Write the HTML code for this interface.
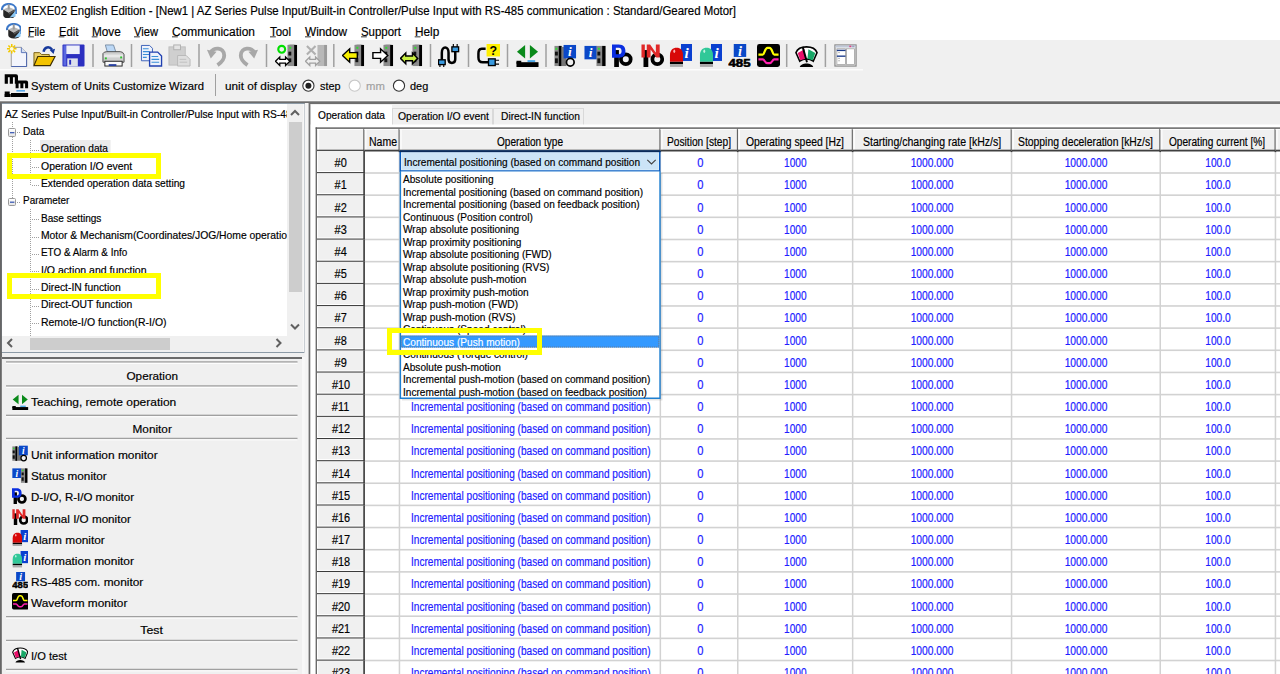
<!DOCTYPE html><html><head><meta charset="utf-8"><style>
html,body{margin:0;padding:0;width:1280px;height:674px;overflow:hidden;background:#f0f0f0;font-family:"Liberation Sans",sans-serif;}
div{position:absolute;box-sizing:border-box;}
.t{white-space:nowrap;transform-origin:0 50%;-webkit-text-stroke:0.18px currentColor;}
svg{position:absolute;}
</style></head><body>
<svg style="left:0;top:0" width="1280" height="674"><rect x="0.00" y="0.00" width="1280.00" height="40.00" fill="#fff"/></svg>
<div class="t" style="left:22.00px;top:5.00px;font-size:12px;line-height:12px;color:#000;transform:scaleX(0.9510);">MEXE02 English Edition - [New1 | AZ Series Pulse Input/Built-in Controller/Pulse Input with RS-485 communication : Standard/Geared Motor]</div>
<div class="t" style="left:28.00px;top:26.00px;font-size:12px;line-height:12px;color:#000;transform:scaleX(0.8792);">File</div>
<svg style="left:0;top:0" width="1280" height="674"><rect x="28.00" y="36.40" width="5.80" height="0.90" fill="#202020"/></svg>
<div class="t" style="left:58.60px;top:26.00px;font-size:12px;line-height:12px;color:#000;transform:scaleX(0.9382);">Edit</div>
<svg style="left:0;top:0" width="1280" height="674"><rect x="58.60" y="36.40" width="5.80" height="0.90" fill="#202020"/></svg>
<div class="t" style="left:91.70px;top:26.00px;font-size:12px;line-height:12px;color:#000;transform:scaleX(0.9815);">Move</div>
<svg style="left:0;top:0" width="1280" height="674"><rect x="91.70" y="36.40" width="5.80" height="0.90" fill="#202020"/></svg>
<div class="t" style="left:134.00px;top:26.00px;font-size:12px;line-height:12px;color:#000;transform:scaleX(0.9305);">View</div>
<svg style="left:0;top:0" width="1280" height="674"><rect x="134.00" y="36.40" width="5.80" height="0.90" fill="#202020"/></svg>
<div class="t" style="left:172.00px;top:26.00px;font-size:12px;line-height:12px;color:#000;transform:scaleX(0.9956);">Communication</div>
<svg style="left:0;top:0" width="1280" height="674"><rect x="172.00" y="36.40" width="5.80" height="0.90" fill="#202020"/></svg>
<div class="t" style="left:270.00px;top:26.00px;font-size:12px;line-height:12px;color:#000;transform:scaleX(0.9539);">Tool</div>
<svg style="left:0;top:0" width="1280" height="674"><rect x="270.00" y="36.40" width="5.80" height="0.90" fill="#202020"/></svg>
<div class="t" style="left:305.00px;top:26.00px;font-size:12px;line-height:12px;color:#000;transform:scaleX(0.9841);">Window</div>
<svg style="left:0;top:0" width="1280" height="674"><rect x="305.00" y="36.40" width="5.80" height="0.90" fill="#202020"/></svg>
<div class="t" style="left:361.00px;top:26.00px;font-size:12px;line-height:12px;color:#000;transform:scaleX(0.9517);">Support</div>
<svg style="left:0;top:0" width="1280" height="674"><rect x="361.00" y="36.40" width="5.80" height="0.90" fill="#202020"/></svg>
<div class="t" style="left:414.70px;top:26.00px;font-size:12px;line-height:12px;color:#000;transform:scaleX(0.9846);">Help</div>
<svg style="left:0;top:0" width="1280" height="674"><rect x="414.70" y="36.40" width="5.80" height="0.90" fill="#202020"/><rect x="0.00" y="69.20" width="863.00" height="1.20" fill="#ffffff"/></svg>
<div class="t" style="left:31.00px;top:81.00px;font-size:11.5px;line-height:11.5px;color:#000;transform:scaleX(0.9773);">System of Units Customize Wizard</div>
<svg style="left:0;top:0" width="1280" height="674"><rect x="215.00" y="74.00" width="1.00" height="22.00" fill="#a0a0a0"/></svg>
<div class="t" style="left:224.70px;top:81.00px;font-size:11.5px;line-height:11.5px;color:#000;transform:scaleX(1.0239);">unit of display</div>
<div class="t" style="left:319.50px;top:81.00px;font-size:11.5px;line-height:11.5px;color:#000;transform:scaleX(0.9431);">step</div>
<div class="t" style="left:365.70px;top:81.00px;font-size:11.5px;line-height:11.5px;color:#a0a0a0;transform:scaleX(0.9812);">mm</div>
<div class="t" style="left:409.80px;top:81.00px;font-size:11.5px;line-height:11.5px;color:#000;transform:scaleX(0.9485);">deg</div>
<svg style="left:300px;top:78px" width="16" height="16"><circle cx="8.4" cy="7.7" r="5.6" fill="#fff" stroke="#333" stroke-width="1.1"/><circle cx="8.4" cy="7.7" r="3" fill="#222"/></svg>
<svg style="left:346px;top:78px" width="16" height="16"><circle cx="8.7" cy="7.7" r="5.6" fill="#fff" stroke="#c8c8c8" stroke-width="1.1"/></svg>
<svg style="left:391px;top:78px" width="16" height="16"><circle cx="8" cy="7.7" r="5.6" fill="#fff" stroke="#333" stroke-width="1.1"/></svg>
<svg style="left:5.5px;top:44px" width="23" height="23" viewBox="0 0 24 24"><path d="M5.5 3.5 H16 L21.5 9 V23.5 H5.5 Z" fill="#f3f5fc" stroke="#9a9a9a"/><path d="M21.5 9 V23.5 H5.5" fill="none" stroke="#4a64b0" stroke-width="1"/><path d="M16 3.5 V9 H21.5" fill="#d4def2" stroke="#5a74b8"/><g stroke="#f2c800" stroke-width="1.6"><path d="M1 5 H11 M6 0 V10 M2.5 1.5 L9.5 8.5 M9.5 1.5 L2.5 8.5"/></g><circle cx="6" cy="5" r="2" fill="#fffbe0"/></svg>
<svg style="left:33px;top:44px" width="23" height="23" viewBox="0 0 24 24"><path d="M1 9 H7 L9 11 H17 V22 H1 Z" fill="#e9cf6a" stroke="#7a6010"/><path d="M5 13 H23 L18 22.5 H1 Z" fill="#f3c300" stroke="#3e2e00" stroke-width="1.2"/><path d="M11 8 C12 3 17 2 20 6" fill="none" stroke="#173a9c" stroke-width="2.6"/><path d="M17.5 6.5 L23 5 L21.5 10.5 Z" fill="#173a9c"/></svg>
<svg style="left:62px;top:44px" width="23" height="23" viewBox="0 0 24 24"><rect x="0.5" y="0.5" width="23" height="23" rx="1" fill="#2b2fc0"/><rect x="1.5" y="1.5" width="3" height="21" fill="#5a68e0"/><rect x="4.5" y="1.5" width="14" height="9" fill="#eef0fa"/><rect x="5.5" y="15" width="11" height="8.5" fill="#dde0ec"/><rect x="7.5" y="16.5" width="2" height="5" fill="#2b2fc0"/></svg>
<svg style="left:101.5px;top:44px" width="23" height="23" viewBox="0 0 24 24"><path d="M3.5 1 H12 L15 10 H6 Z" fill="#bcd8f6" stroke="#7a8ea6"/><path d="M1 10 Q2 8 5 8 H19 Q22 8 23 11 V19 H1 Z" fill="#cfcfcf" stroke="#4a4a4a"/><rect x="2" y="11" width="20" height="3" fill="#e8e8e8"/><rect x="3" y="18" width="18" height="5" fill="#fafafa" stroke="#222"/><rect x="7" y="21" width="8" height="2" fill="#2840a0"/><rect x="3" y="14" width="2" height="2" fill="#2ec02e"/><rect x="19" y="13" width="2" height="2" fill="#2ec02e"/></svg>
<svg style="left:139.5px;top:44px" width="23" height="23" viewBox="0 0 24 24"><path d="M1.5 1.5 H10 L13 4.5 V17.5 H1.5Z" fill="#eef2fb" stroke="#3b60b8"/><g stroke="#3b8ed8" stroke-width="1.2"><path d="M3 5 H9 M3 8 H10 M3 11 H10 M3 14 H7"/></g><path d="M10 8.5 H18.5 L22.5 12.5 V23 H10Z" fill="#eef2fb" stroke="#2040b0" stroke-width="1.4"/><g stroke="#3b8ed8" stroke-width="1.2"><path d="M12 13 H19 M12 16 H20 M12 19 H20"/></g></svg>
<svg style="left:168px;top:44px" width="23" height="23" viewBox="0 0 24 24"><rect x="1" y="3" width="17" height="19" fill="#cfcfcf" stroke="#bdbdbd"/><rect x="6" y="1" width="7" height="5" fill="#e4e4e4" stroke="#b0b0b0"/><path d="M10 12 H19 L23 16 V23 H10Z" fill="#dedede" stroke="#b8b8b8"/><g stroke="#c0c0c0"><path d="M12 16 H19 M12 19 H20"/></g></svg>
<svg style="left:206px;top:44px" width="23" height="23" viewBox="0 0 24 24"><path d="M5 9 C7 3 19 3 19 12 C19 17 15 20 12 22" fill="none" stroke="#a8a8a8" stroke-width="4"/><path d="M1 6 L5 15 L11 8 Z" fill="#a8a8a8"/></svg>
<svg style="left:236px;top:44px" width="23" height="23" viewBox="0 0 24 24"><path d="M19 9 C17 3 5 3 5 12 C5 17 9 20 12 22" fill="none" stroke="#a8a8a8" stroke-width="4"/><path d="M23 6 L19 15 L13 8 Z" fill="#a8a8a8"/></svg>
<svg style="left:275px;top:44px" width="23" height="23" viewBox="0 0 24 24"><rect x="13" y="1" width="9" height="22" fill="#8c8c8c"/><rect x="20" y="1" width="3" height="22" fill="#000"/><path d="M13 1 L16 0 H22 L20 1Z" fill="#bbb"/><rect x="15" y="3" width="2" height="2" fill="#2ee02e"/><rect x="14" y="8" width="3" height="4" fill="#111"/><rect x="14" y="15" width="3" height="4" fill="#111"/><circle cx="7" cy="5.5" r="3.6" fill="none" stroke="#00e000" stroke-width="2.2"/><path d="M0.5 18 L5 13.5 V16 H11 V13.5 L15.5 18 L11 22.5 V20 H5 V22.5 Z" fill="#fff" stroke="#000" stroke-width="1.3"/></svg>
<svg style="left:304.5px;top:44px" width="23" height="23" viewBox="0 0 24 24"><rect x="13" y="1" width="9" height="22" fill="#b8b8b8"/><rect x="20" y="1" width="3" height="22" fill="#9a9a9a"/><path d="M2 2 L11 11 M11 2 L2 11" stroke="#b0b0b0" stroke-width="2.2"/><path d="M0.5 18 L5 13.5 V16 H11 V13.5 L15.5 18 L11 22.5 V20 H5 V22.5 Z" fill="#eee" stroke="#a0a0a0" stroke-width="1.3"/></svg>
<svg style="left:342px;top:44px" width="23" height="23" viewBox="0 0 24 24"><rect x="13" y="1" width="9" height="22" fill="#8c8c8c"/><rect x="20" y="1" width="3" height="22" fill="#000"/><path d="M13 1 L16 0 H22 L20 1Z" fill="#bbb"/><rect x="15" y="3" width="2" height="2" fill="#2ee02e"/><rect x="14" y="8" width="3" height="4" fill="#111"/><rect x="14" y="15" width="3" height="4" fill="#111"/><path d="M0.5 12 L8 5 V9 H16 V15 H8 V19 Z" fill="#f8f000" stroke="#000" stroke-width="1.5"/></svg>
<svg style="left:371px;top:44px" width="23" height="23" viewBox="0 0 24 24"><rect x="13" y="1" width="9" height="22" fill="#8c8c8c"/><rect x="20" y="1" width="3" height="22" fill="#000"/><path d="M13 1 L16 0 H22 L20 1Z" fill="#bbb"/><rect x="15" y="3" width="2" height="2" fill="#2ee02e"/><rect x="14" y="8" width="3" height="4" fill="#111"/><rect x="14" y="15" width="3" height="4" fill="#111"/><path d="M17.5 12 L10 5 V9 H2 V15 H10 V19 Z" fill="#fff" stroke="#000" stroke-width="1.5"/></svg>
<svg style="left:400px;top:44px" width="23" height="23" viewBox="0 0 24 24"><rect x="13" y="1" width="9" height="22" fill="#8c8c8c"/><rect x="20" y="1" width="3" height="22" fill="#000"/><path d="M13 1 L16 0 H22 L20 1Z" fill="#bbb"/><rect x="15" y="3" width="2" height="2" fill="#2ee02e"/><rect x="14" y="8" width="3" height="4" fill="#111"/><rect x="14" y="15" width="3" height="4" fill="#111"/><path d="M0.5 15 L6 9.5 V12.5 H13 V9.5 L18.5 15 L13 20.5 V17.5 H6 V20.5 Z" fill="#c8f040" stroke="#000" stroke-width="1.5"/></svg>
<svg style="left:438px;top:44px" width="23" height="23" viewBox="0 0 24 24"><path d="M4 18 V9 C4 2 11 2 11 9 V16 C11 21 18 21 18 16 V7" fill="none" stroke="#000" stroke-width="2.6"/><rect x="0.5" y="16.5" width="7" height="5" fill="#3a9be0" stroke="#000" stroke-width="1.4"/><path d="M2 22 V24 M6 22 V24" stroke="#000" stroke-width="1.2"/><rect x="14.5" y="3" width="7" height="5" fill="#3a9be0" stroke="#000" stroke-width="1.4"/><path d="M16 0 V3 M20 0 V3" stroke="#000" stroke-width="1.2"/></svg>
<svg style="left:477px;top:44px" width="23" height="23" viewBox="0 0 24 24"><rect x="10" y="0" width="14" height="13" fill="#ffef00"/><text x="17" y="11" font-family="Liberation Sans" font-weight="bold" font-size="13" text-anchor="middle" fill="#000">?</text><path d="M9 5 H5 C2 5 1.5 7 1.5 10 V14 C1.5 18 3 19 6 19 H13" fill="none" stroke="#000" stroke-width="2.6"/><rect x="12" y="15.5" width="7" height="7" fill="#3a9be0" stroke="#000" stroke-width="1.4"/><path d="M19 17 H23 M19 21 H23" stroke="#000" stroke-width="1.2"/></svg>
<svg style="left:516px;top:44px" width="23" height="23" viewBox="0 0 24 24"><path d="M9.5 1 L1 8 L9.5 15 Z" fill="#0a8a1a"/><path d="M14.5 1 L23 8 L14.5 15 Z" fill="#0a8a1a"/><rect x="12" y="17" width="8" height="1.6" fill="#2a9ae8"/><rect x="0.5" y="19" width="23" height="5" fill="#000"/><rect x="0.5" y="17.5" width="5" height="3" fill="#000"/></svg>
<svg style="left:554px;top:44px" width="23" height="23" viewBox="0 0 24 24"><rect x="0.5" y="2" width="7" height="21" fill="#888"/><rect x="5" y="2" width="3" height="21" fill="#000"/><rect x="1.5" y="4" width="2" height="2" fill="#2ee02e"/><rect x="1" y="8" width="3" height="4" fill="#111"/><rect x="1" y="15" width="3" height="5" fill="#111"/><rect x="8" y="3" width="5" height="20" fill="#777"/><rect x="10" y="1" width="13" height="14" fill="#0a48c8"/><text x="16.5" y="13" font-family="Liberation Serif" font-style="italic" font-weight="bold" font-size="14" text-anchor="middle" fill="#fff">i</text><circle cx="17" cy="19" r="4" fill="none" stroke="#000" stroke-width="1.8"/></svg>
<svg style="left:583.5px;top:44px" width="23" height="23" viewBox="0 0 24 24"><rect x="0.5" y="2" width="13" height="14" fill="#0a48c8"/><text x="7" y="14" font-family="Liberation Serif" font-style="italic" font-weight="bold" font-size="14" text-anchor="middle" fill="#fff">i</text><rect x="13" y="2" width="7" height="21" fill="#888"/><rect x="19" y="2" width="3.5" height="21" fill="#000"/><rect x="14.5" y="4" width="2" height="2" fill="#2ee02e"/><rect x="14" y="8" width="3" height="4" fill="#111"/><rect x="14" y="15" width="3" height="5" fill="#111"/></svg>
<svg style="left:612px;top:44px" width="23" height="23" viewBox="0 0 24 24"><rect x="2.3" y="6.3" width="4.9" height="17.7" fill="#000"/><circle cx="14.4" cy="16" r="5.1" fill="none" stroke="#000" stroke-width="3.9"/><path fill-rule="evenodd" d="M0 0.5 H7 C12.5 0.5 14 4 14 7.5 C14 11 12.5 14.3 7 14.3 H0 Z M4 4 H7 C9.5 4 10 6 10 7.5 C10 9 9.5 10.8 7 10.8 H4 Z" fill="#0a2ee0"/></svg>
<svg style="left:640.5px;top:44px" width="23" height="23" viewBox="0 0 24 24"><rect x="2.6" y="6.3" width="5" height="17.7" fill="#000"/><circle cx="17" cy="16" r="5.1" fill="none" stroke="#000" stroke-width="3.9"/><path d="M0.5 0.5 H4 V14.2 H0.5Z M6 0.5 H9.5 L15.5 9 V0.5 H19.5 V14.2 H16 L10 5.7 V14.2 H6Z" fill="#e02828"/></svg>
<svg style="left:669px;top:44px" width="23" height="23" viewBox="0 0 24 24"><rect x="12.5" y="0" width="11.5" height="17.7" fill="#0a40d0"/><text x="18.5" y="15" font-family="Liberation Serif" font-style="italic" font-weight="bold" font-size="16" text-anchor="middle" fill="#fff">i</text><path d="M1 18.6 V12 C1 6.5 4 4 8 4 C12 4 14.6 6.5 14.6 12 V18.6 Z" fill="#d80808"/><ellipse cx="5.5" cy="7.5" rx="1" ry="1.8" fill="#f8b0b0"/><rect x="1" y="18.6" width="13.6" height="2.3" fill="#000"/><rect x="1" y="20.9" width="13.6" height="3" fill="#aaa"/></svg>
<svg style="left:698.5px;top:44px" width="23" height="23" viewBox="0 0 24 24"><rect x="12.5" y="0" width="11.5" height="17.7" fill="#0a40d0"/><text x="18.5" y="15" font-family="Liberation Serif" font-style="italic" font-weight="bold" font-size="16" text-anchor="middle" fill="#fff">i</text><path d="M1 18.6 V12 C1 6.5 4 4 8 4 C12 4 14.6 6.5 14.6 12 V18.6 Z" fill="#30c898"/><ellipse cx="5.5" cy="7.5" rx="1" ry="1.8" fill="#c0f0e0"/><rect x="1" y="18.6" width="13.6" height="2.3" fill="#000"/><rect x="1" y="20.9" width="13.6" height="3" fill="#aaa"/></svg>
<svg style="left:728px;top:44px" width="23" height="23" viewBox="0 0 24 24"><rect x="6" y="0" width="13" height="13.5" fill="#0a48c8"/><text x="12.5" y="12" font-family="Liberation Serif" font-style="italic" font-weight="bold" font-size="15" text-anchor="middle" fill="#fff">i</text><text x="0.5" y="23.8" font-family="Liberation Sans" font-weight="bold" font-size="12" fill="#000" stroke="#000" stroke-width="0.6" textLength="23" lengthAdjust="spacingAndGlyphs">485</text></svg>
<svg style="left:757px;top:44px" width="23" height="23" viewBox="0 0 24 24"><rect x="0" y="0" width="24" height="24" rx="2.5" fill="#000"/><path d="M1.5 11 H6 C8 11 8 4 11 4 H13 C16 4 16 11 18 11 H22.5" fill="none" stroke="#ffff00" stroke-width="2.3"/><path d="M1.5 16 H6 C8 16 8 20 11 20 H13 C16 20 16 16 18 16 H22.5" fill="none" stroke="#ff20b0" stroke-width="2.3"/></svg>
<svg style="left:795px;top:44px" width="23" height="23" viewBox="0 0 24 24"><path d="M1 9 C4 1 20 1 23 9 L19 18 C15 15 9 15 5 18 Z" fill="#fff" stroke="#000" stroke-width="1.6"/><path d="M2.8 9.5 L10 5.5 L11 15.5 L5.5 17 Z" fill="#e8106a"/><path d="M14 5.5 L21.2 9.5 L18.5 17 L13 15.5 Z" fill="#18a868"/><path d="M8 3 L12.5 19" stroke="#000" stroke-width="2"/><path d="M5 24 C6 19 18 19 19 24 Z" fill="#000"/></svg>
<svg style="left:834px;top:44px" width="23" height="23" viewBox="0 0 24 24"><rect x="1" y="1" width="22" height="22" fill="#fafafa" stroke="#8a8a8a" stroke-width="1.3"/><rect x="1.5" y="1.5" width="21" height="2.2" fill="#c0c8d8"/><rect x="16" y="1.7" width="2" height="1.6" fill="#e04080"/><rect x="19" y="1.7" width="2" height="1.6" fill="#a0a0c0"/><rect x="3" y="5" width="9" height="16.5" fill="#fff" stroke="#9a9a9a" stroke-width="0.8"/><rect x="3" y="6" width="9" height="1.4" fill="#1a3a8a"/><rect x="3" y="12" width="9" height="1.4" fill="#1a3a8a"/><path d="M4.5 9 H6 M4.5 15 H6 M4.5 17.5 H6" stroke="#888" stroke-width="0.8"/><rect x="13" y="5" width="8.5" height="16.5" fill="#fff" stroke="#9a9a9a" stroke-width="0.8"/><rect x="2" y="21.5" width="20" height="1" fill="#bbb"/></svg>
<svg style="left:0;top:0" width="1280" height="674"><rect x="92.25" y="44.00" width="1.50" height="23.00" fill="#a0a0a0"/><rect x="130.75" y="44.00" width="1.50" height="23.00" fill="#a0a0a0"/><rect x="198.25" y="44.00" width="1.50" height="23.00" fill="#a0a0a0"/><rect x="265.75" y="44.00" width="1.50" height="23.00" fill="#a0a0a0"/><rect x="333.05" y="44.00" width="1.50" height="23.00" fill="#a0a0a0"/><rect x="429.75" y="44.00" width="1.50" height="23.00" fill="#a0a0a0"/><rect x="467.75" y="44.00" width="1.50" height="23.00" fill="#a0a0a0"/><rect x="506.75" y="44.00" width="1.50" height="23.00" fill="#a0a0a0"/><rect x="545.25" y="44.00" width="1.50" height="23.00" fill="#a0a0a0"/><rect x="785.95" y="44.00" width="1.50" height="23.00" fill="#a0a0a0"/><rect x="824.65" y="44.00" width="1.50" height="23.00" fill="#a0a0a0"/></svg>
<svg style="left:1px;top:2.5px" width="15.5" height="15.5" viewBox="0 0 24 24"><path d="M1.5 11 C1 4 7 1.5 12 1.5 C17 1.5 23 4 23 10 V17" fill="none" stroke="#3d78c8" stroke-width="3.2"/><path d="M3.5 10 L12 6 L21 10 L12 15 Z" fill="#b8b8b8"/><path d="M3.5 10 L12 15 L21 10 V20 C21 23 16 24 12 24 C7 24 3.5 22 3.5 19 Z" fill="#262626"/><path d="M12 15 L21 10 V13 L12 18Z" fill="#555"/><rect x="10.5" y="2" width="3" height="8" fill="#9a9a9a"/><path d="M13 23 L22.5 12 V21 Z" fill="#8cc8f4"/></svg>
<svg style="left:5.7px;top:23px" width="15.5" height="15.5" viewBox="0 0 24 24"><path d="M1.5 11 C1 4 7 1.5 12 1.5 C17 1.5 23 4 23 10 V17" fill="none" stroke="#3d78c8" stroke-width="3.2"/><path d="M3.5 10 L12 6 L21 10 L12 15 Z" fill="#b8b8b8"/><path d="M3.5 10 L12 15 L21 10 V20 C21 23 16 24 12 24 C7 24 3.5 22 3.5 19 Z" fill="#262626"/><path d="M12 15 L21 10 V13 L12 18Z" fill="#555"/><rect x="10.5" y="2" width="3" height="8" fill="#9a9a9a"/><path d="M13 23 L22.5 12 V21 Z" fill="#8cc8f4"/></svg>
<svg style="left:0;top:70px" width="40" height="30" viewBox="0 70 40 30"><path d="M4.7 83.7 V74.3 H16 Q18 74.3 18 76.3 V83.7 H14.808 V77.3 H12.946000000000002 V83.7 H9.754000000000001 V77.3 H7.892 V83.7 Z" fill="#000"/><path d="M15.6 88.3 V80.5 H26.1 Q28.1 80.5 28.1 82.5 V88.3 H25.1 V83.5 H23.35 V88.3 H20.35 V83.5 H18.6 V88.3 Z" fill="#000"/><rect x="4.7" y="91.5" width="5" height="5.5" fill="#000"/><rect x="4.7" y="94" width="6" height="3" fill="#000"/><rect x="11" y="93" width="17.1" height="4" fill="#000"/><rect x="16.4" y="90.2" width="8.6" height="1.3" fill="#3a9ae8"/></svg>
<svg style="left:0;top:0" width="1280" height="674"><rect x="0.00" y="100.50" width="1280.00" height="1.00" fill="#fbfbfb"/><rect x="0.00" y="101.30" width="1280.00" height="2.70" fill="#6e6e6e"/><rect x="0.00" y="103.00" width="304.50" height="250.00" fill="#8c9aa6"/><rect x="0.00" y="103.00" width="1.80" height="571.00" fill="#666"/><rect x="2.00" y="104.00" width="302.00" height="248.00" fill="#fff"/><rect x="287.00" y="104.00" width="16.50" height="232.00" fill="#f0f0f0"/><rect x="289.00" y="122.00" width="13.00" height="170.00" fill="#cdcdcd"/><rect x="2.00" y="336.00" width="285.50" height="16.00" fill="#f0f0f0"/><rect x="30.00" y="338.00" width="140.00" height="12.00" fill="#cdcdcd"/><rect x="287.00" y="336.00" width="16.50" height="16.00" fill="#f0f0f0"/><rect x="40.00" y="140.00" width="70.60" height="12.60" fill="#ececec"/></svg>
<div style="left:2px;top:104px;width:285px;height:232px;overflow:hidden">
<div class="t" style="left:3px;top:5.00px;font-size:11.5px;line-height:11.5px;transform:scaleX(0.8880)">AZ Series Pulse Input/Built-in Controller/Pulse Input with RS-485 communication</div>
<div class="t" style="left:21px;top:22.00px;font-size:11.5px;line-height:11.5px;transform:scaleX(0.8768)">Data</div>
<div class="t" style="left:39px;top:39.00px;font-size:11.5px;line-height:11.5px;transform:scaleX(0.8806)">Operation data</div>
<div class="t" style="left:39px;top:57.00px;font-size:11.5px;line-height:11.5px;transform:scaleX(0.9087)">Operation I/O event</div>
<div class="t" style="left:39px;top:74.00px;font-size:11.5px;line-height:11.5px;transform:scaleX(0.8867)">Extended operation data setting</div>
<div class="t" style="left:21px;top:91.00px;font-size:11.5px;line-height:11.5px;transform:scaleX(0.8643)">Parameter</div>
<div class="t" style="left:39px;top:109.00px;font-size:11.5px;line-height:11.5px;transform:scaleX(0.8749)">Base settings</div>
<div class="t" style="left:39px;top:126.00px;font-size:11.5px;line-height:11.5px;transform:scaleX(0.8990)">Motor &amp; Mechanism(Coordinates/JOG/Home operation)</div>
<div class="t" style="left:39px;top:143.00px;font-size:11.5px;line-height:11.5px;transform:scaleX(0.8609)">ETO &amp; Alarm &amp; Info</div>
<div class="t" style="left:39px;top:161.00px;font-size:11.5px;line-height:11.5px;transform:scaleX(0.9168)">I/O action and function</div>
<div class="t" style="left:39px;top:178.00px;font-size:11.5px;line-height:11.5px;transform:scaleX(0.8972)">Direct-IN function</div>
<div class="t" style="left:39px;top:195.00px;font-size:11.5px;line-height:11.5px;transform:scaleX(0.8994)">Direct-OUT function</div>
<div class="t" style="left:39px;top:213.00px;font-size:11.5px;line-height:11.5px;transform:scaleX(0.9092)">Remote-I/O function(R-I/O)</div>
</div>
<div style="left:11.5px;top:122px;width:1px;height:6px;background:repeating-linear-gradient(to bottom,#a0a0a0 0 1px,transparent 1px 2px)"></div>
<div style="left:11.5px;top:137px;width:1px;height:60.5px;background:repeating-linear-gradient(to bottom,#a0a0a0 0 1px,transparent 1px 2px)"></div>
<div style="left:30px;top:139.5px;width:1px;height:45.0px;background:repeating-linear-gradient(to bottom,#a0a0a0 0 1px,transparent 1px 2px)"></div>
<div style="left:30px;top:209px;width:1px;height:127px;background:repeating-linear-gradient(to bottom,#a0a0a0 0 1px,transparent 1px 2px)"></div>
<div style="left:31.5px;top:150.06px;width:8.0px;height:1px;background:repeating-linear-gradient(to right,#a0a0a0 0 1px,transparent 1px 2px)"></div>
<div style="left:31.5px;top:167.39px;width:8.0px;height:1px;background:repeating-linear-gradient(to right,#a0a0a0 0 1px,transparent 1px 2px)"></div>
<div style="left:31.5px;top:184.72px;width:8.0px;height:1px;background:repeating-linear-gradient(to right,#a0a0a0 0 1px,transparent 1px 2px)"></div>
<div style="left:31.5px;top:219.38px;width:8.0px;height:1px;background:repeating-linear-gradient(to right,#a0a0a0 0 1px,transparent 1px 2px)"></div>
<div style="left:31.5px;top:236.70999999999998px;width:8.0px;height:1px;background:repeating-linear-gradient(to right,#a0a0a0 0 1px,transparent 1px 2px)"></div>
<div style="left:31.5px;top:254.04000000000002px;width:8.0px;height:1px;background:repeating-linear-gradient(to right,#a0a0a0 0 1px,transparent 1px 2px)"></div>
<div style="left:31.5px;top:271.36999999999995px;width:8.0px;height:1px;background:repeating-linear-gradient(to right,#a0a0a0 0 1px,transparent 1px 2px)"></div>
<div style="left:31.5px;top:288.7px;width:8.0px;height:1px;background:repeating-linear-gradient(to right,#a0a0a0 0 1px,transparent 1px 2px)"></div>
<div style="left:31.5px;top:306.03000000000003px;width:8.0px;height:1px;background:repeating-linear-gradient(to right,#a0a0a0 0 1px,transparent 1px 2px)"></div>
<div style="left:31.5px;top:323.35999999999996px;width:8.0px;height:1px;background:repeating-linear-gradient(to right,#a0a0a0 0 1px,transparent 1px 2px)"></div>
<div style="left:16.5px;top:132.2px;width:4.5px;height:1px;background:repeating-linear-gradient(to right,#a0a0a0 0 1px,transparent 1px 2px)"></div>
<div style="left:16.5px;top:201.6px;width:4.5px;height:1px;background:repeating-linear-gradient(to right,#a0a0a0 0 1px,transparent 1px 2px)"></div>
<div style="left:7.7px;top:128.3px;width:8.6px;height:8.6px;border:1px solid #9a9a9a;border-radius:1.5px;background:linear-gradient(#fff,#e4e4e4)"></div>
<svg style="left:0;top:0" width="1280" height="674"><rect x="10.00" y="132.10" width="4.40" height="1.20" fill="#3050b0"/></svg>
<div style="left:7.7px;top:197.8px;width:8.6px;height:8.6px;border:1px solid #9a9a9a;border-radius:1.5px;background:linear-gradient(#fff,#e4e4e4)"></div>
<svg style="left:0;top:0" width="1280" height="674"><rect x="10.00" y="201.60" width="4.40" height="1.20" fill="#3050b0"/></svg>
<svg style="left:0;top:0" width="1280" height="674"><path d="M291 115 L295 111 L299 115" fill="none" stroke="#606060" stroke-width="2"/></svg>
<svg style="left:0;top:0" width="1280" height="674"><path d="M291 324.5 L295 328.5 L299 324.5" fill="none" stroke="#606060" stroke-width="2"/></svg>
<svg style="left:0;top:0" width="1280" height="674"><path d="M12 339 L8 343 L12 347" fill="none" stroke="#606060" stroke-width="2"/></svg>
<svg style="left:0;top:0" width="1280" height="674"><path d="M276.5 339 L280.5 343 L276.5 347" fill="none" stroke="#606060" stroke-width="2"/></svg>
<svg style="left:0;top:0" width="1280" height="674"><rect x="0.00" y="357.00" width="304.00" height="317.00" fill="#f0f0f0"/><rect x="0.00" y="352.00" width="1.80" height="322.00" fill="#666"/><rect x="2.00" y="357.00" width="301.00" height="2.00" fill="#6a6a6a"/><rect x="6.00" y="361.25" width="291.50" height="1.50" fill="#a0a0a0"/><rect x="6.00" y="362.75" width="291.50" height="1.10" fill="#ffffff"/><rect x="6.00" y="385.25" width="291.50" height="1.50" fill="#a0a0a0"/><rect x="6.00" y="386.75" width="291.50" height="1.10" fill="#ffffff"/><rect x="6.00" y="414.65" width="291.50" height="1.50" fill="#a0a0a0"/><rect x="6.00" y="416.15" width="291.50" height="1.10" fill="#ffffff"/><rect x="6.00" y="437.75" width="291.50" height="1.50" fill="#a0a0a0"/><rect x="6.00" y="439.25" width="291.50" height="1.10" fill="#ffffff"/><rect x="6.00" y="616.00" width="291.50" height="1.50" fill="#a0a0a0"/><rect x="6.00" y="617.50" width="291.50" height="1.10" fill="#ffffff"/><rect x="6.00" y="639.75" width="291.50" height="1.50" fill="#a0a0a0"/><rect x="6.00" y="641.25" width="291.50" height="1.10" fill="#ffffff"/><rect x="6.00" y="668.75" width="291.50" height="1.50" fill="#a0a0a0"/><rect x="6.00" y="670.25" width="291.50" height="1.10" fill="#ffffff"/></svg>
<div class="t" style="left:126.75px;top:371.00px;font-size:11.5px;line-height:11.5px;color:#000;transform-origin:50% 50%;transform:scaleX(1.0197);">Operation</div>
<div class="t" style="left:132.83px;top:424.00px;font-size:11.5px;line-height:11.5px;color:#000;transform-origin:50% 50%;transform:scaleX(1.0249);">Monitor</div>
<div class="t" style="left:141.45px;top:625.00px;font-size:11.5px;line-height:11.5px;color:#000;transform-origin:50% 50%;transform:scaleX(1.0716);">Test</div>
<div class="t" style="left:30.80px;top:397.00px;font-size:11.5px;line-height:11.5px;color:#000;transform:scaleX(1.0419);">Teaching, remote operation</div>
<div class="t" style="left:31.00px;top:450.00px;font-size:11.5px;line-height:11.5px;color:#000;transform:scaleX(1.0379);">Unit information monitor</div>
<div class="t" style="left:31.00px;top:471.00px;font-size:11.5px;line-height:11.5px;color:#000;transform:scaleX(1.0210);">Status monitor</div>
<div class="t" style="left:31.00px;top:492.00px;font-size:11.5px;line-height:11.5px;color:#000;transform:scaleX(1.0013);">D-I/O, R-I/O monitor</div>
<div class="t" style="left:31.00px;top:514.00px;font-size:11.5px;line-height:11.5px;color:#000;transform:scaleX(1.0139);">Internal I/O monitor</div>
<div class="t" style="left:31.00px;top:535.00px;font-size:11.5px;line-height:11.5px;color:#000;transform:scaleX(1.0311);">Alarm monitor</div>
<div class="t" style="left:31.00px;top:556.00px;font-size:11.5px;line-height:11.5px;color:#000;transform:scaleX(1.0397);">Information monitor</div>
<div class="t" style="left:31.00px;top:577.00px;font-size:11.5px;line-height:11.5px;color:#000;transform:scaleX(1.0336);">RS-485 com. monitor</div>
<div class="t" style="left:31.00px;top:598.00px;font-size:11.5px;line-height:11.5px;color:#000;transform:scaleX(1.0309);">Waveform monitor</div>
<div class="t" style="left:31.00px;top:651.00px;font-size:11.5px;line-height:11.5px;color:#000;transform:scaleX(0.9658);">I/O test</div>
<svg style="left:12px;top:393.5px" width="16.5" height="16.5" viewBox="0 0 24 24"><path d="M9.5 1 L1 8 L9.5 15 Z" fill="#0a8a1a"/><path d="M14.5 1 L23 8 L14.5 15 Z" fill="#0a8a1a"/><rect x="12" y="17" width="8" height="1.6" fill="#2a9ae8"/><rect x="0.5" y="19" width="23" height="5" fill="#000"/><rect x="0.5" y="17.5" width="5" height="3" fill="#000"/></svg>
<svg style="left:11.5px;top:445.4px" width="16.5" height="16.5" viewBox="0 0 24 24"><rect x="0.5" y="2" width="7" height="21" fill="#888"/><rect x="5" y="2" width="3" height="21" fill="#000"/><rect x="1.5" y="4" width="2" height="2" fill="#2ee02e"/><rect x="1" y="8" width="3" height="4" fill="#111"/><rect x="1" y="15" width="3" height="5" fill="#111"/><rect x="8" y="3" width="5" height="20" fill="#777"/><rect x="10" y="1" width="13" height="14" fill="#0a48c8"/><text x="16.5" y="13" font-family="Liberation Serif" font-style="italic" font-weight="bold" font-size="14" text-anchor="middle" fill="#fff">i</text><circle cx="17" cy="19" r="4" fill="none" stroke="#000" stroke-width="1.8"/></svg>
<svg style="left:11.5px;top:466.52px" width="16.5" height="16.5" viewBox="0 0 24 24"><rect x="0.5" y="2" width="13" height="14" fill="#0a48c8"/><text x="7" y="14" font-family="Liberation Serif" font-style="italic" font-weight="bold" font-size="14" text-anchor="middle" fill="#fff">i</text><rect x="13" y="2" width="7" height="21" fill="#888"/><rect x="19" y="2" width="3.5" height="21" fill="#000"/><rect x="14.5" y="4" width="2" height="2" fill="#2ee02e"/><rect x="14" y="8" width="3" height="4" fill="#111"/><rect x="14" y="15" width="3" height="5" fill="#111"/></svg>
<svg style="left:11.5px;top:487.64px" width="16.5" height="16.5" viewBox="0 0 24 24"><rect x="2.3" y="6.3" width="4.9" height="17.7" fill="#000"/><circle cx="14.4" cy="16" r="5.1" fill="none" stroke="#000" stroke-width="3.9"/><path fill-rule="evenodd" d="M0 0.5 H7 C12.5 0.5 14 4 14 7.5 C14 11 12.5 14.3 7 14.3 H0 Z M4 4 H7 C9.5 4 10 6 10 7.5 C10 9 9.5 10.8 7 10.8 H4 Z" fill="#0a2ee0"/></svg>
<svg style="left:11.5px;top:508.75999999999993px" width="16.5" height="16.5" viewBox="0 0 24 24"><rect x="2.6" y="6.3" width="5" height="17.7" fill="#000"/><circle cx="17" cy="16" r="5.1" fill="none" stroke="#000" stroke-width="3.9"/><path d="M0.5 0.5 H4 V14.2 H0.5Z M6 0.5 H9.5 L15.5 9 V0.5 H19.5 V14.2 H16 L10 5.7 V14.2 H6Z" fill="#e02828"/></svg>
<svg style="left:11.5px;top:529.88px" width="16.5" height="16.5" viewBox="0 0 24 24"><rect x="12.5" y="0" width="11.5" height="17.7" fill="#0a40d0"/><text x="18.5" y="15" font-family="Liberation Serif" font-style="italic" font-weight="bold" font-size="16" text-anchor="middle" fill="#fff">i</text><path d="M1 18.6 V12 C1 6.5 4 4 8 4 C12 4 14.6 6.5 14.6 12 V18.6 Z" fill="#d80808"/><ellipse cx="5.5" cy="7.5" rx="1" ry="1.8" fill="#f8b0b0"/><rect x="1" y="18.6" width="13.6" height="2.3" fill="#000"/><rect x="1" y="20.9" width="13.6" height="3" fill="#aaa"/></svg>
<svg style="left:11.5px;top:551.0px" width="16.5" height="16.5" viewBox="0 0 24 24"><rect x="12.5" y="0" width="11.5" height="17.7" fill="#0a40d0"/><text x="18.5" y="15" font-family="Liberation Serif" font-style="italic" font-weight="bold" font-size="16" text-anchor="middle" fill="#fff">i</text><path d="M1 18.6 V12 C1 6.5 4 4 8 4 C12 4 14.6 6.5 14.6 12 V18.6 Z" fill="#30c898"/><ellipse cx="5.5" cy="7.5" rx="1" ry="1.8" fill="#c0f0e0"/><rect x="1" y="18.6" width="13.6" height="2.3" fill="#000"/><rect x="1" y="20.9" width="13.6" height="3" fill="#aaa"/></svg>
<svg style="left:11.5px;top:572.12px" width="16.5" height="16.5" viewBox="0 0 24 24"><rect x="6" y="0" width="13" height="13.5" fill="#0a48c8"/><text x="12.5" y="12" font-family="Liberation Serif" font-style="italic" font-weight="bold" font-size="15" text-anchor="middle" fill="#fff">i</text><text x="0.5" y="23.8" font-family="Liberation Sans" font-weight="bold" font-size="12" fill="#000" stroke="#000" stroke-width="0.6" textLength="23" lengthAdjust="spacingAndGlyphs">485</text></svg>
<svg style="left:11.5px;top:593.24px" width="16.5" height="16.5" viewBox="0 0 24 24"><rect x="0" y="0" width="24" height="24" rx="2.5" fill="#000"/><path d="M1.5 11 H6 C8 11 8 4 11 4 H13 C16 4 16 11 18 11 H22.5" fill="none" stroke="#ffff00" stroke-width="2.3"/><path d="M1.5 16 H6 C8 16 8 20 11 20 H13 C16 20 16 16 18 16 H22.5" fill="none" stroke="#ff20b0" stroke-width="2.3"/></svg>
<svg style="left:11.5px;top:646.2px" width="16.5" height="16.5" viewBox="0 0 24 24"><path d="M1 9 C4 1 20 1 23 9 L19 18 C15 15 9 15 5 18 Z" fill="#fff" stroke="#000" stroke-width="1.6"/><path d="M2.8 9.5 L10 5.5 L11 15.5 L5.5 17 Z" fill="#e8106a"/><path d="M14 5.5 L21.2 9.5 L18.5 17 L13 15.5 Z" fill="#18a868"/><path d="M8 3 L12.5 19" stroke="#000" stroke-width="2"/><path d="M5 24 C6 19 18 19 19 24 Z" fill="#000"/></svg>
<svg style="left:0;top:0" width="1280" height="674"><rect x="302.00" y="357.00" width="3.00" height="317.00" fill="#f8f8f8"/><rect x="304.80" y="103.00" width="4.10" height="571.00" fill="#f4f4f4"/><rect x="308.60" y="103.00" width="2.00" height="571.00" fill="#6e6e6e"/><rect x="310.60" y="104.00" width="970.00" height="570.00" fill="#f0f0f0"/><rect x="311.00" y="105.00" width="81.00" height="23.00" fill="#fff"/></svg>
<div class="t" style="left:317.70px;top:110.00px;font-size:11.5px;line-height:11.5px;color:#000;transform:scaleX(0.8806);">Operation data</div>
<div style="left:392px;top:107.5px;width:101.39999999999998px;height:17px;background:#f0f0f0;border:1px solid #d9d9d9;border-bottom:none"></div>
<div style="left:493.4px;top:107.5px;width:90.20000000000005px;height:17px;background:#f0f0f0;border:1px solid #d9d9d9;border-bottom:none"></div>
<div class="t" style="left:397.50px;top:111.00px;font-size:11.5px;line-height:11.5px;color:#000;transform:scaleX(0.9067);">Operation I/O event</div>
<div class="t" style="left:500.50px;top:111.00px;font-size:11.5px;line-height:11.5px;color:#000;transform:scaleX(0.8893);">Direct-IN function</div>
<svg style="left:0;top:0" width="1280" height="674"><rect x="310.70" y="124.50" width="969.30" height="549.50" fill="#fff"/><rect x="315.60" y="127.40" width="964.40" height="546.60" fill="#fff"/><rect x="364.30" y="172.20" width="915.70" height="1.60" fill="#d2d2d2"/><rect x="364.30" y="194.36" width="915.70" height="1.60" fill="#d2d2d2"/><rect x="364.30" y="216.52" width="915.70" height="1.60" fill="#d2d2d2"/><rect x="364.30" y="238.68" width="915.70" height="1.60" fill="#d2d2d2"/><rect x="364.30" y="260.84" width="915.70" height="1.60" fill="#d2d2d2"/><rect x="364.30" y="283.00" width="915.70" height="1.60" fill="#d2d2d2"/><rect x="364.30" y="305.16" width="915.70" height="1.60" fill="#d2d2d2"/><rect x="364.30" y="327.32" width="915.70" height="1.60" fill="#d2d2d2"/><rect x="364.30" y="349.48" width="915.70" height="1.60" fill="#d2d2d2"/><rect x="364.30" y="371.64" width="915.70" height="1.60" fill="#d2d2d2"/><rect x="364.30" y="393.80" width="915.70" height="1.60" fill="#d2d2d2"/><rect x="364.30" y="415.96" width="915.70" height="1.60" fill="#d2d2d2"/><rect x="364.30" y="438.12" width="915.70" height="1.60" fill="#d2d2d2"/><rect x="364.30" y="460.28" width="915.70" height="1.60" fill="#d2d2d2"/><rect x="364.30" y="482.44" width="915.70" height="1.60" fill="#d2d2d2"/><rect x="364.30" y="504.60" width="915.70" height="1.60" fill="#d2d2d2"/><rect x="364.30" y="526.76" width="915.70" height="1.60" fill="#d2d2d2"/><rect x="364.30" y="548.92" width="915.70" height="1.60" fill="#d2d2d2"/><rect x="364.30" y="571.08" width="915.70" height="1.60" fill="#d2d2d2"/><rect x="364.30" y="593.24" width="915.70" height="1.60" fill="#d2d2d2"/><rect x="364.30" y="615.40" width="915.70" height="1.60" fill="#d2d2d2"/><rect x="364.30" y="637.56" width="915.70" height="1.60" fill="#d2d2d2"/><rect x="364.30" y="659.72" width="915.70" height="1.60" fill="#d2d2d2"/><rect x="364.30" y="681.88" width="915.70" height="1.60" fill="#d2d2d2"/><rect x="398.70" y="150.80" width="1.50" height="523.20" fill="#d2d2d2"/><rect x="659.60" y="150.80" width="1.50" height="523.20" fill="#d2d2d2"/><rect x="737.00" y="150.80" width="1.50" height="523.20" fill="#d2d2d2"/><rect x="851.90" y="150.80" width="1.50" height="523.20" fill="#d2d2d2"/><rect x="1010.80" y="150.80" width="1.50" height="523.20" fill="#d2d2d2"/><rect x="1159.50" y="150.80" width="1.50" height="523.20" fill="#d2d2d2"/><rect x="1274.70" y="150.80" width="1.50" height="523.20" fill="#d2d2d2"/><rect x="317.00" y="128.70" width="47.30" height="22.10" fill="#f0f0f0"/><rect x="318.00" y="128.70" width="1.10" height="21.40" fill="#ffffff"/><rect x="317.00" y="128.70" width="47.30" height="1.10" fill="#ffffff"/><rect x="363.40" y="128.70" width="1.60" height="23.40" fill="#404040"/><rect x="317.00" y="149.70" width="47.30" height="1.80" fill="#404040"/><rect x="364.30" y="128.70" width="35.20" height="22.10" fill="#f0f0f0"/><rect x="365.30" y="128.70" width="1.10" height="21.40" fill="#ffffff"/><rect x="364.30" y="128.70" width="35.20" height="1.10" fill="#ffffff"/><rect x="398.60" y="128.70" width="1.60" height="23.40" fill="#404040"/><rect x="364.30" y="149.70" width="35.20" height="1.80" fill="#404040"/><rect x="399.50" y="128.70" width="260.90" height="22.10" fill="#f0f0f0"/><rect x="400.50" y="128.70" width="1.10" height="21.40" fill="#ffffff"/><rect x="399.50" y="128.70" width="260.90" height="1.10" fill="#ffffff"/><rect x="659.50" y="128.70" width="1.60" height="23.40" fill="#404040"/><rect x="399.50" y="149.70" width="260.90" height="1.80" fill="#404040"/><rect x="660.40" y="128.70" width="77.40" height="22.10" fill="#f0f0f0"/><rect x="661.40" y="128.70" width="1.10" height="21.40" fill="#ffffff"/><rect x="660.40" y="128.70" width="77.40" height="1.10" fill="#ffffff"/><rect x="736.90" y="128.70" width="1.60" height="23.40" fill="#404040"/><rect x="660.40" y="149.70" width="77.40" height="1.80" fill="#404040"/><rect x="737.80" y="128.70" width="114.90" height="22.10" fill="#f0f0f0"/><rect x="738.80" y="128.70" width="1.10" height="21.40" fill="#ffffff"/><rect x="737.80" y="128.70" width="114.90" height="1.10" fill="#ffffff"/><rect x="851.80" y="128.70" width="1.60" height="23.40" fill="#404040"/><rect x="737.80" y="149.70" width="114.90" height="1.80" fill="#404040"/><rect x="852.70" y="128.70" width="158.90" height="22.10" fill="#f0f0f0"/><rect x="853.70" y="128.70" width="1.10" height="21.40" fill="#ffffff"/><rect x="852.70" y="128.70" width="158.90" height="1.10" fill="#ffffff"/><rect x="1010.70" y="128.70" width="1.60" height="23.40" fill="#404040"/><rect x="852.70" y="149.70" width="158.90" height="1.80" fill="#404040"/><rect x="1011.60" y="128.70" width="148.70" height="22.10" fill="#f0f0f0"/><rect x="1012.60" y="128.70" width="1.10" height="21.40" fill="#ffffff"/><rect x="1011.60" y="128.70" width="148.70" height="1.10" fill="#ffffff"/><rect x="1159.40" y="128.70" width="1.60" height="23.40" fill="#404040"/><rect x="1011.60" y="149.70" width="148.70" height="1.80" fill="#404040"/><rect x="1160.30" y="128.70" width="115.20" height="22.10" fill="#f0f0f0"/><rect x="1161.30" y="128.70" width="1.10" height="21.40" fill="#ffffff"/><rect x="1160.30" y="128.70" width="115.20" height="1.10" fill="#ffffff"/><rect x="1274.60" y="128.70" width="1.60" height="23.40" fill="#404040"/><rect x="1160.30" y="149.70" width="115.20" height="1.80" fill="#404040"/><rect x="1275.50" y="128.70" width="14.50" height="22.10" fill="#f0f0f0"/><rect x="1276.50" y="128.70" width="1.10" height="21.40" fill="#ffffff"/><rect x="1275.50" y="128.70" width="14.50" height="1.10" fill="#ffffff"/><rect x="1289.10" y="128.70" width="1.60" height="23.40" fill="#404040"/><rect x="1275.50" y="149.70" width="14.50" height="1.80" fill="#404040"/><rect x="315.60" y="127.40" width="1.40" height="546.60" fill="#6a6a6a"/><rect x="315.60" y="127.40" width="964.40" height="1.40" fill="#5a5a5a"/></svg>
<div class="t" style="left:369.00px;top:136.00px;font-size:12px;line-height:12px;color:#000;transform:scaleX(0.8747);">Name</div>
<div class="t" style="left:497.00px;top:136.00px;font-size:12px;line-height:12px;color:#000;transform:scaleX(0.8385);">Operation type</div>
<div class="t" style="left:667.00px;top:136.00px;font-size:12px;line-height:12px;color:#000;transform:scaleX(0.8491);">Position [step]</div>
<div class="t" style="left:746.00px;top:136.00px;font-size:12px;line-height:12px;color:#000;transform:scaleX(0.8642);">Operating speed [Hz]</div>
<div class="t" style="left:862.80px;top:136.00px;font-size:12px;line-height:12px;color:#000;transform:scaleX(0.8779);">Starting/changing rate [kHz/s]</div>
<div class="t" style="left:1018.00px;top:136.00px;font-size:12px;line-height:12px;color:#000;transform:scaleX(0.8649);">Stopping deceleration [kHz/s]</div>
<div class="t" style="left:1169.00px;top:136.00px;font-size:12px;line-height:12px;color:#000;transform:scaleX(0.8417);">Operating current [%]</div>
<svg style="left:0;top:0" width="1280" height="674"><rect x="317.00" y="150.94" width="47.30" height="22.16" fill="#f0f0f0"/><rect x="317.00" y="151.94" width="1.10" height="20.16" fill="#ffffff"/><rect x="317.00" y="171.00" width="47.30" height="1.10" fill="#ffffff"/><rect x="317.00" y="173.90" width="47.30" height="1.10" fill="#ffffff"/><rect x="317.00" y="172.10" width="47.30" height="1.80" fill="#383838"/><rect x="363.30" y="150.94" width="1.60" height="22.16" fill="#383838"/></svg>
<div class="t" style="left:333.93px;top:157.00px;font-size:12px;line-height:12px;color:#000;transform-origin:50% 50%;transform:scaleX(0.9104);">#0</div>
<svg style="left:0;top:0" width="1280" height="674"><rect x="317.00" y="173.10" width="47.30" height="22.16" fill="#f0f0f0"/><rect x="317.00" y="174.10" width="1.10" height="20.16" fill="#ffffff"/><rect x="317.00" y="193.16" width="47.30" height="1.10" fill="#ffffff"/><rect x="317.00" y="196.06" width="47.30" height="1.10" fill="#ffffff"/><rect x="317.00" y="194.26" width="47.30" height="1.80" fill="#383838"/><rect x="363.30" y="173.10" width="1.60" height="22.16" fill="#383838"/></svg>
<div class="t" style="left:333.93px;top:179.00px;font-size:12px;line-height:12px;color:#000;transform-origin:50% 50%;transform:scaleX(0.9104);">#1</div>
<svg style="left:0;top:0" width="1280" height="674"><rect x="317.00" y="195.26" width="47.30" height="22.16" fill="#f0f0f0"/><rect x="317.00" y="196.26" width="1.10" height="20.16" fill="#ffffff"/><rect x="317.00" y="215.32" width="47.30" height="1.10" fill="#ffffff"/><rect x="317.00" y="218.22" width="47.30" height="1.10" fill="#ffffff"/><rect x="317.00" y="216.42" width="47.30" height="1.80" fill="#383838"/><rect x="363.30" y="195.26" width="1.60" height="22.16" fill="#383838"/></svg>
<div class="t" style="left:333.93px;top:202.00px;font-size:12px;line-height:12px;color:#000;transform-origin:50% 50%;transform:scaleX(0.9104);">#2</div>
<svg style="left:0;top:0" width="1280" height="674"><rect x="317.00" y="217.42" width="47.30" height="22.16" fill="#f0f0f0"/><rect x="317.00" y="218.42" width="1.10" height="20.16" fill="#ffffff"/><rect x="317.00" y="237.48" width="47.30" height="1.10" fill="#ffffff"/><rect x="317.00" y="240.38" width="47.30" height="1.10" fill="#ffffff"/><rect x="317.00" y="238.58" width="47.30" height="1.80" fill="#383838"/><rect x="363.30" y="217.42" width="1.60" height="22.16" fill="#383838"/></svg>
<div class="t" style="left:333.93px;top:224.00px;font-size:12px;line-height:12px;color:#000;transform-origin:50% 50%;transform:scaleX(0.9104);">#3</div>
<svg style="left:0;top:0" width="1280" height="674"><rect x="317.00" y="239.58" width="47.30" height="22.16" fill="#f0f0f0"/><rect x="317.00" y="240.58" width="1.10" height="20.16" fill="#ffffff"/><rect x="317.00" y="259.64" width="47.30" height="1.10" fill="#ffffff"/><rect x="317.00" y="262.54" width="47.30" height="1.10" fill="#ffffff"/><rect x="317.00" y="260.74" width="47.30" height="1.80" fill="#383838"/><rect x="363.30" y="239.58" width="1.60" height="22.16" fill="#383838"/></svg>
<div class="t" style="left:333.93px;top:246.00px;font-size:12px;line-height:12px;color:#000;transform-origin:50% 50%;transform:scaleX(0.9104);">#4</div>
<svg style="left:0;top:0" width="1280" height="674"><rect x="317.00" y="261.74" width="47.30" height="22.16" fill="#f0f0f0"/><rect x="317.00" y="262.74" width="1.10" height="20.16" fill="#ffffff"/><rect x="317.00" y="281.80" width="47.30" height="1.10" fill="#ffffff"/><rect x="317.00" y="284.70" width="47.30" height="1.10" fill="#ffffff"/><rect x="317.00" y="282.90" width="47.30" height="1.80" fill="#383838"/><rect x="363.30" y="261.74" width="1.60" height="22.16" fill="#383838"/></svg>
<div class="t" style="left:333.93px;top:268.00px;font-size:12px;line-height:12px;color:#000;transform-origin:50% 50%;transform:scaleX(0.9104);">#5</div>
<svg style="left:0;top:0" width="1280" height="674"><rect x="317.00" y="283.90" width="47.30" height="22.16" fill="#f0f0f0"/><rect x="317.00" y="284.90" width="1.10" height="20.16" fill="#ffffff"/><rect x="317.00" y="303.96" width="47.30" height="1.10" fill="#ffffff"/><rect x="317.00" y="306.86" width="47.30" height="1.10" fill="#ffffff"/><rect x="317.00" y="305.06" width="47.30" height="1.80" fill="#383838"/><rect x="363.30" y="283.90" width="1.60" height="22.16" fill="#383838"/></svg>
<div class="t" style="left:333.93px;top:290.00px;font-size:12px;line-height:12px;color:#000;transform-origin:50% 50%;transform:scaleX(0.9104);">#6</div>
<svg style="left:0;top:0" width="1280" height="674"><rect x="317.00" y="306.06" width="47.30" height="22.16" fill="#f0f0f0"/><rect x="317.00" y="307.06" width="1.10" height="20.16" fill="#ffffff"/><rect x="317.00" y="326.12" width="47.30" height="1.10" fill="#ffffff"/><rect x="317.00" y="329.02" width="47.30" height="1.10" fill="#ffffff"/><rect x="317.00" y="327.22" width="47.30" height="1.80" fill="#383838"/><rect x="363.30" y="306.06" width="1.60" height="22.16" fill="#383838"/></svg>
<div class="t" style="left:333.93px;top:312.00px;font-size:12px;line-height:12px;color:#000;transform-origin:50% 50%;transform:scaleX(0.9104);">#7</div>
<svg style="left:0;top:0" width="1280" height="674"><rect x="317.00" y="328.22" width="47.30" height="22.16" fill="#f0f0f0"/><rect x="317.00" y="329.22" width="1.10" height="20.16" fill="#ffffff"/><rect x="317.00" y="348.28" width="47.30" height="1.10" fill="#ffffff"/><rect x="317.00" y="351.18" width="47.30" height="1.10" fill="#ffffff"/><rect x="317.00" y="349.38" width="47.30" height="1.80" fill="#383838"/><rect x="363.30" y="328.22" width="1.60" height="22.16" fill="#383838"/></svg>
<div class="t" style="left:333.93px;top:335.00px;font-size:12px;line-height:12px;color:#000;transform-origin:50% 50%;transform:scaleX(0.9104);">#8</div>
<svg style="left:0;top:0" width="1280" height="674"><rect x="317.00" y="350.38" width="47.30" height="22.16" fill="#f0f0f0"/><rect x="317.00" y="351.38" width="1.10" height="20.16" fill="#ffffff"/><rect x="317.00" y="370.44" width="47.30" height="1.10" fill="#ffffff"/><rect x="317.00" y="373.34" width="47.30" height="1.10" fill="#ffffff"/><rect x="317.00" y="371.54" width="47.30" height="1.80" fill="#383838"/><rect x="363.30" y="350.38" width="1.60" height="22.16" fill="#383838"/></svg>
<div class="t" style="left:333.93px;top:357.00px;font-size:12px;line-height:12px;color:#000;transform-origin:50% 50%;transform:scaleX(0.9104);">#9</div>
<svg style="left:0;top:0" width="1280" height="674"><rect x="317.00" y="372.54" width="47.30" height="22.16" fill="#f0f0f0"/><rect x="317.00" y="373.54" width="1.10" height="20.16" fill="#ffffff"/><rect x="317.00" y="392.60" width="47.30" height="1.10" fill="#ffffff"/><rect x="317.00" y="395.50" width="47.30" height="1.10" fill="#ffffff"/><rect x="317.00" y="393.70" width="47.30" height="1.80" fill="#383838"/><rect x="363.30" y="372.54" width="1.60" height="22.16" fill="#383838"/></svg>
<div class="t" style="left:330.59px;top:379.00px;font-size:12px;line-height:12px;color:#000;transform-origin:50% 50%;transform:scaleX(0.9104);">#10</div>
<svg style="left:0;top:0" width="1280" height="674"><rect x="317.00" y="394.70" width="47.30" height="22.16" fill="#f0f0f0"/><rect x="317.00" y="395.70" width="1.10" height="20.16" fill="#ffffff"/><rect x="317.00" y="414.76" width="47.30" height="1.10" fill="#ffffff"/><rect x="317.00" y="417.66" width="47.30" height="1.10" fill="#ffffff"/><rect x="317.00" y="415.86" width="47.30" height="1.80" fill="#383838"/><rect x="363.30" y="394.70" width="1.60" height="22.16" fill="#383838"/></svg>
<div class="t" style="left:331.03px;top:401.00px;font-size:12px;line-height:12px;color:#000;transform-origin:50% 50%;transform:scaleX(0.9104);">#11</div>
<svg style="left:0;top:0" width="1280" height="674"><rect x="317.00" y="416.86" width="47.30" height="22.16" fill="#f0f0f0"/><rect x="317.00" y="417.86" width="1.10" height="20.16" fill="#ffffff"/><rect x="317.00" y="436.92" width="47.30" height="1.10" fill="#ffffff"/><rect x="317.00" y="439.82" width="47.30" height="1.10" fill="#ffffff"/><rect x="317.00" y="438.02" width="47.30" height="1.80" fill="#383838"/><rect x="363.30" y="416.86" width="1.60" height="22.16" fill="#383838"/></svg>
<div class="t" style="left:330.59px;top:423.00px;font-size:12px;line-height:12px;color:#000;transform-origin:50% 50%;transform:scaleX(0.9104);">#12</div>
<svg style="left:0;top:0" width="1280" height="674"><rect x="317.00" y="439.02" width="47.30" height="22.16" fill="#f0f0f0"/><rect x="317.00" y="440.02" width="1.10" height="20.16" fill="#ffffff"/><rect x="317.00" y="459.08" width="47.30" height="1.10" fill="#ffffff"/><rect x="317.00" y="461.98" width="47.30" height="1.10" fill="#ffffff"/><rect x="317.00" y="460.18" width="47.30" height="1.80" fill="#383838"/><rect x="363.30" y="439.02" width="1.60" height="22.16" fill="#383838"/></svg>
<div class="t" style="left:330.59px;top:445.00px;font-size:12px;line-height:12px;color:#000;transform-origin:50% 50%;transform:scaleX(0.9104);">#13</div>
<svg style="left:0;top:0" width="1280" height="674"><rect x="317.00" y="461.18" width="47.30" height="22.16" fill="#f0f0f0"/><rect x="317.00" y="462.18" width="1.10" height="20.16" fill="#ffffff"/><rect x="317.00" y="481.24" width="47.30" height="1.10" fill="#ffffff"/><rect x="317.00" y="484.14" width="47.30" height="1.10" fill="#ffffff"/><rect x="317.00" y="482.34" width="47.30" height="1.80" fill="#383838"/><rect x="363.30" y="461.18" width="1.60" height="22.16" fill="#383838"/></svg>
<div class="t" style="left:330.59px;top:468.00px;font-size:12px;line-height:12px;color:#000;transform-origin:50% 50%;transform:scaleX(0.9104);">#14</div>
<svg style="left:0;top:0" width="1280" height="674"><rect x="317.00" y="483.34" width="47.30" height="22.16" fill="#f0f0f0"/><rect x="317.00" y="484.34" width="1.10" height="20.16" fill="#ffffff"/><rect x="317.00" y="503.40" width="47.30" height="1.10" fill="#ffffff"/><rect x="317.00" y="506.30" width="47.30" height="1.10" fill="#ffffff"/><rect x="317.00" y="504.50" width="47.30" height="1.80" fill="#383838"/><rect x="363.30" y="483.34" width="1.60" height="22.16" fill="#383838"/></svg>
<div class="t" style="left:330.59px;top:490.00px;font-size:12px;line-height:12px;color:#000;transform-origin:50% 50%;transform:scaleX(0.9104);">#15</div>
<svg style="left:0;top:0" width="1280" height="674"><rect x="317.00" y="505.50" width="47.30" height="22.16" fill="#f0f0f0"/><rect x="317.00" y="506.50" width="1.10" height="20.16" fill="#ffffff"/><rect x="317.00" y="525.56" width="47.30" height="1.10" fill="#ffffff"/><rect x="317.00" y="528.46" width="47.30" height="1.10" fill="#ffffff"/><rect x="317.00" y="526.66" width="47.30" height="1.80" fill="#383838"/><rect x="363.30" y="505.50" width="1.60" height="22.16" fill="#383838"/></svg>
<div class="t" style="left:330.59px;top:512.00px;font-size:12px;line-height:12px;color:#000;transform-origin:50% 50%;transform:scaleX(0.9104);">#16</div>
<svg style="left:0;top:0" width="1280" height="674"><rect x="317.00" y="527.66" width="47.30" height="22.16" fill="#f0f0f0"/><rect x="317.00" y="528.66" width="1.10" height="20.16" fill="#ffffff"/><rect x="317.00" y="547.72" width="47.30" height="1.10" fill="#ffffff"/><rect x="317.00" y="550.62" width="47.30" height="1.10" fill="#ffffff"/><rect x="317.00" y="548.82" width="47.30" height="1.80" fill="#383838"/><rect x="363.30" y="527.66" width="1.60" height="22.16" fill="#383838"/></svg>
<div class="t" style="left:330.59px;top:534.00px;font-size:12px;line-height:12px;color:#000;transform-origin:50% 50%;transform:scaleX(0.9104);">#17</div>
<svg style="left:0;top:0" width="1280" height="674"><rect x="317.00" y="549.82" width="47.30" height="22.16" fill="#f0f0f0"/><rect x="317.00" y="550.82" width="1.10" height="20.16" fill="#ffffff"/><rect x="317.00" y="569.88" width="47.30" height="1.10" fill="#ffffff"/><rect x="317.00" y="572.78" width="47.30" height="1.10" fill="#ffffff"/><rect x="317.00" y="570.98" width="47.30" height="1.80" fill="#383838"/><rect x="363.30" y="549.82" width="1.60" height="22.16" fill="#383838"/></svg>
<div class="t" style="left:330.59px;top:556.00px;font-size:12px;line-height:12px;color:#000;transform-origin:50% 50%;transform:scaleX(0.9104);">#18</div>
<svg style="left:0;top:0" width="1280" height="674"><rect x="317.00" y="571.98" width="47.30" height="22.16" fill="#f0f0f0"/><rect x="317.00" y="572.98" width="1.10" height="20.16" fill="#ffffff"/><rect x="317.00" y="592.04" width="47.30" height="1.10" fill="#ffffff"/><rect x="317.00" y="594.94" width="47.30" height="1.10" fill="#ffffff"/><rect x="317.00" y="593.14" width="47.30" height="1.80" fill="#383838"/><rect x="363.30" y="571.98" width="1.60" height="22.16" fill="#383838"/></svg>
<div class="t" style="left:330.59px;top:578.00px;font-size:12px;line-height:12px;color:#000;transform-origin:50% 50%;transform:scaleX(0.9104);">#19</div>
<svg style="left:0;top:0" width="1280" height="674"><rect x="317.00" y="594.14" width="47.30" height="22.16" fill="#f0f0f0"/><rect x="317.00" y="595.14" width="1.10" height="20.16" fill="#ffffff"/><rect x="317.00" y="614.20" width="47.30" height="1.10" fill="#ffffff"/><rect x="317.00" y="617.10" width="47.30" height="1.10" fill="#ffffff"/><rect x="317.00" y="615.30" width="47.30" height="1.80" fill="#383838"/><rect x="363.30" y="594.14" width="1.60" height="22.16" fill="#383838"/></svg>
<div class="t" style="left:330.59px;top:601.00px;font-size:12px;line-height:12px;color:#000;transform-origin:50% 50%;transform:scaleX(0.9104);">#20</div>
<svg style="left:0;top:0" width="1280" height="674"><rect x="317.00" y="616.30" width="47.30" height="22.16" fill="#f0f0f0"/><rect x="317.00" y="617.30" width="1.10" height="20.16" fill="#ffffff"/><rect x="317.00" y="636.36" width="47.30" height="1.10" fill="#ffffff"/><rect x="317.00" y="639.26" width="47.30" height="1.10" fill="#ffffff"/><rect x="317.00" y="637.46" width="47.30" height="1.80" fill="#383838"/><rect x="363.30" y="616.30" width="1.60" height="22.16" fill="#383838"/></svg>
<div class="t" style="left:330.59px;top:623.00px;font-size:12px;line-height:12px;color:#000;transform-origin:50% 50%;transform:scaleX(0.9104);">#21</div>
<svg style="left:0;top:0" width="1280" height="674"><rect x="317.00" y="638.46" width="47.30" height="22.16" fill="#f0f0f0"/><rect x="317.00" y="639.46" width="1.10" height="20.16" fill="#ffffff"/><rect x="317.00" y="658.52" width="47.30" height="1.10" fill="#ffffff"/><rect x="317.00" y="661.42" width="47.30" height="1.10" fill="#ffffff"/><rect x="317.00" y="659.62" width="47.30" height="1.80" fill="#383838"/><rect x="363.30" y="638.46" width="1.60" height="22.16" fill="#383838"/></svg>
<div class="t" style="left:330.59px;top:645.00px;font-size:12px;line-height:12px;color:#000;transform-origin:50% 50%;transform:scaleX(0.9104);">#22</div>
<svg style="left:0;top:0" width="1280" height="674"><rect x="317.00" y="660.62" width="47.30" height="22.16" fill="#f0f0f0"/><rect x="317.00" y="661.62" width="1.10" height="20.16" fill="#ffffff"/><rect x="317.00" y="680.68" width="47.30" height="1.10" fill="#ffffff"/><rect x="317.00" y="683.58" width="47.30" height="1.10" fill="#ffffff"/><rect x="317.00" y="681.78" width="47.30" height="1.80" fill="#383838"/><rect x="363.30" y="660.62" width="1.60" height="22.16" fill="#383838"/></svg>
<div class="t" style="left:330.59px;top:667.00px;font-size:12px;line-height:12px;color:#000;transform-origin:50% 50%;transform:scaleX(0.9104);">#23</div>
<div class="t" style="left:696.66px;top:157.00px;font-size:12px;line-height:12px;color:#2020ff;transform-origin:50% 50%;transform:scaleX(0.9290);">0</div>
<div class="t" style="left:782.15px;top:157.00px;font-size:12px;line-height:12px;color:#2020ff;transform-origin:50% 50%;transform:scaleX(0.8428);">1000</div>
<div class="t" style="left:907.47px;top:157.00px;font-size:12px;line-height:12px;color:#2020ff;transform-origin:50% 50%;transform:scaleX(0.8531);">1000.000</div>
<div class="t" style="left:1061.47px;top:157.00px;font-size:12px;line-height:12px;color:#2020ff;transform-origin:50% 50%;transform:scaleX(0.8531);">1000.000</div>
<div class="t" style="left:1203.49px;top:157.00px;font-size:12px;line-height:12px;color:#2020ff;transform-origin:50% 50%;transform:scaleX(0.8492);">100.0</div>
<div class="t" style="left:696.66px;top:179.00px;font-size:12px;line-height:12px;color:#2020ff;transform-origin:50% 50%;transform:scaleX(0.9290);">0</div>
<div class="t" style="left:782.15px;top:179.00px;font-size:12px;line-height:12px;color:#2020ff;transform-origin:50% 50%;transform:scaleX(0.8428);">1000</div>
<div class="t" style="left:907.47px;top:179.00px;font-size:12px;line-height:12px;color:#2020ff;transform-origin:50% 50%;transform:scaleX(0.8531);">1000.000</div>
<div class="t" style="left:1061.47px;top:179.00px;font-size:12px;line-height:12px;color:#2020ff;transform-origin:50% 50%;transform:scaleX(0.8531);">1000.000</div>
<div class="t" style="left:1203.49px;top:179.00px;font-size:12px;line-height:12px;color:#2020ff;transform-origin:50% 50%;transform:scaleX(0.8492);">100.0</div>
<div class="t" style="left:696.66px;top:202.00px;font-size:12px;line-height:12px;color:#2020ff;transform-origin:50% 50%;transform:scaleX(0.9290);">0</div>
<div class="t" style="left:782.15px;top:202.00px;font-size:12px;line-height:12px;color:#2020ff;transform-origin:50% 50%;transform:scaleX(0.8428);">1000</div>
<div class="t" style="left:907.47px;top:202.00px;font-size:12px;line-height:12px;color:#2020ff;transform-origin:50% 50%;transform:scaleX(0.8531);">1000.000</div>
<div class="t" style="left:1061.47px;top:202.00px;font-size:12px;line-height:12px;color:#2020ff;transform-origin:50% 50%;transform:scaleX(0.8531);">1000.000</div>
<div class="t" style="left:1203.49px;top:202.00px;font-size:12px;line-height:12px;color:#2020ff;transform-origin:50% 50%;transform:scaleX(0.8492);">100.0</div>
<div class="t" style="left:696.66px;top:224.00px;font-size:12px;line-height:12px;color:#2020ff;transform-origin:50% 50%;transform:scaleX(0.9290);">0</div>
<div class="t" style="left:782.15px;top:224.00px;font-size:12px;line-height:12px;color:#2020ff;transform-origin:50% 50%;transform:scaleX(0.8428);">1000</div>
<div class="t" style="left:907.47px;top:224.00px;font-size:12px;line-height:12px;color:#2020ff;transform-origin:50% 50%;transform:scaleX(0.8531);">1000.000</div>
<div class="t" style="left:1061.47px;top:224.00px;font-size:12px;line-height:12px;color:#2020ff;transform-origin:50% 50%;transform:scaleX(0.8531);">1000.000</div>
<div class="t" style="left:1203.49px;top:224.00px;font-size:12px;line-height:12px;color:#2020ff;transform-origin:50% 50%;transform:scaleX(0.8492);">100.0</div>
<div class="t" style="left:696.66px;top:246.00px;font-size:12px;line-height:12px;color:#2020ff;transform-origin:50% 50%;transform:scaleX(0.9290);">0</div>
<div class="t" style="left:782.15px;top:246.00px;font-size:12px;line-height:12px;color:#2020ff;transform-origin:50% 50%;transform:scaleX(0.8428);">1000</div>
<div class="t" style="left:907.47px;top:246.00px;font-size:12px;line-height:12px;color:#2020ff;transform-origin:50% 50%;transform:scaleX(0.8531);">1000.000</div>
<div class="t" style="left:1061.47px;top:246.00px;font-size:12px;line-height:12px;color:#2020ff;transform-origin:50% 50%;transform:scaleX(0.8531);">1000.000</div>
<div class="t" style="left:1203.49px;top:246.00px;font-size:12px;line-height:12px;color:#2020ff;transform-origin:50% 50%;transform:scaleX(0.8492);">100.0</div>
<div class="t" style="left:696.66px;top:268.00px;font-size:12px;line-height:12px;color:#2020ff;transform-origin:50% 50%;transform:scaleX(0.9290);">0</div>
<div class="t" style="left:782.15px;top:268.00px;font-size:12px;line-height:12px;color:#2020ff;transform-origin:50% 50%;transform:scaleX(0.8428);">1000</div>
<div class="t" style="left:907.47px;top:268.00px;font-size:12px;line-height:12px;color:#2020ff;transform-origin:50% 50%;transform:scaleX(0.8531);">1000.000</div>
<div class="t" style="left:1061.47px;top:268.00px;font-size:12px;line-height:12px;color:#2020ff;transform-origin:50% 50%;transform:scaleX(0.8531);">1000.000</div>
<div class="t" style="left:1203.49px;top:268.00px;font-size:12px;line-height:12px;color:#2020ff;transform-origin:50% 50%;transform:scaleX(0.8492);">100.0</div>
<div class="t" style="left:696.66px;top:290.00px;font-size:12px;line-height:12px;color:#2020ff;transform-origin:50% 50%;transform:scaleX(0.9290);">0</div>
<div class="t" style="left:782.15px;top:290.00px;font-size:12px;line-height:12px;color:#2020ff;transform-origin:50% 50%;transform:scaleX(0.8428);">1000</div>
<div class="t" style="left:907.47px;top:290.00px;font-size:12px;line-height:12px;color:#2020ff;transform-origin:50% 50%;transform:scaleX(0.8531);">1000.000</div>
<div class="t" style="left:1061.47px;top:290.00px;font-size:12px;line-height:12px;color:#2020ff;transform-origin:50% 50%;transform:scaleX(0.8531);">1000.000</div>
<div class="t" style="left:1203.49px;top:290.00px;font-size:12px;line-height:12px;color:#2020ff;transform-origin:50% 50%;transform:scaleX(0.8492);">100.0</div>
<div class="t" style="left:696.66px;top:312.00px;font-size:12px;line-height:12px;color:#2020ff;transform-origin:50% 50%;transform:scaleX(0.9290);">0</div>
<div class="t" style="left:782.15px;top:312.00px;font-size:12px;line-height:12px;color:#2020ff;transform-origin:50% 50%;transform:scaleX(0.8428);">1000</div>
<div class="t" style="left:907.47px;top:312.00px;font-size:12px;line-height:12px;color:#2020ff;transform-origin:50% 50%;transform:scaleX(0.8531);">1000.000</div>
<div class="t" style="left:1061.47px;top:312.00px;font-size:12px;line-height:12px;color:#2020ff;transform-origin:50% 50%;transform:scaleX(0.8531);">1000.000</div>
<div class="t" style="left:1203.49px;top:312.00px;font-size:12px;line-height:12px;color:#2020ff;transform-origin:50% 50%;transform:scaleX(0.8492);">100.0</div>
<div class="t" style="left:696.66px;top:335.00px;font-size:12px;line-height:12px;color:#2020ff;transform-origin:50% 50%;transform:scaleX(0.9290);">0</div>
<div class="t" style="left:782.15px;top:335.00px;font-size:12px;line-height:12px;color:#2020ff;transform-origin:50% 50%;transform:scaleX(0.8428);">1000</div>
<div class="t" style="left:907.47px;top:335.00px;font-size:12px;line-height:12px;color:#2020ff;transform-origin:50% 50%;transform:scaleX(0.8531);">1000.000</div>
<div class="t" style="left:1061.47px;top:335.00px;font-size:12px;line-height:12px;color:#2020ff;transform-origin:50% 50%;transform:scaleX(0.8531);">1000.000</div>
<div class="t" style="left:1203.49px;top:335.00px;font-size:12px;line-height:12px;color:#2020ff;transform-origin:50% 50%;transform:scaleX(0.8492);">100.0</div>
<div class="t" style="left:696.66px;top:357.00px;font-size:12px;line-height:12px;color:#2020ff;transform-origin:50% 50%;transform:scaleX(0.9290);">0</div>
<div class="t" style="left:782.15px;top:357.00px;font-size:12px;line-height:12px;color:#2020ff;transform-origin:50% 50%;transform:scaleX(0.8428);">1000</div>
<div class="t" style="left:907.47px;top:357.00px;font-size:12px;line-height:12px;color:#2020ff;transform-origin:50% 50%;transform:scaleX(0.8531);">1000.000</div>
<div class="t" style="left:1061.47px;top:357.00px;font-size:12px;line-height:12px;color:#2020ff;transform-origin:50% 50%;transform:scaleX(0.8531);">1000.000</div>
<div class="t" style="left:1203.49px;top:357.00px;font-size:12px;line-height:12px;color:#2020ff;transform-origin:50% 50%;transform:scaleX(0.8492);">100.0</div>
<div class="t" style="left:696.66px;top:379.00px;font-size:12px;line-height:12px;color:#2020ff;transform-origin:50% 50%;transform:scaleX(0.9290);">0</div>
<div class="t" style="left:782.15px;top:379.00px;font-size:12px;line-height:12px;color:#2020ff;transform-origin:50% 50%;transform:scaleX(0.8428);">1000</div>
<div class="t" style="left:907.47px;top:379.00px;font-size:12px;line-height:12px;color:#2020ff;transform-origin:50% 50%;transform:scaleX(0.8531);">1000.000</div>
<div class="t" style="left:1061.47px;top:379.00px;font-size:12px;line-height:12px;color:#2020ff;transform-origin:50% 50%;transform:scaleX(0.8531);">1000.000</div>
<div class="t" style="left:1203.49px;top:379.00px;font-size:12px;line-height:12px;color:#2020ff;transform-origin:50% 50%;transform:scaleX(0.8492);">100.0</div>
<div class="t" style="left:411.20px;top:401.00px;font-size:12px;line-height:12px;color:#2020ff;transform:scaleX(0.8409);">Incremental positioning (based on command position)</div>
<div class="t" style="left:696.66px;top:401.00px;font-size:12px;line-height:12px;color:#2020ff;transform-origin:50% 50%;transform:scaleX(0.9290);">0</div>
<div class="t" style="left:782.15px;top:401.00px;font-size:12px;line-height:12px;color:#2020ff;transform-origin:50% 50%;transform:scaleX(0.8428);">1000</div>
<div class="t" style="left:907.47px;top:401.00px;font-size:12px;line-height:12px;color:#2020ff;transform-origin:50% 50%;transform:scaleX(0.8531);">1000.000</div>
<div class="t" style="left:1061.47px;top:401.00px;font-size:12px;line-height:12px;color:#2020ff;transform-origin:50% 50%;transform:scaleX(0.8531);">1000.000</div>
<div class="t" style="left:1203.49px;top:401.00px;font-size:12px;line-height:12px;color:#2020ff;transform-origin:50% 50%;transform:scaleX(0.8492);">100.0</div>
<div class="t" style="left:411.20px;top:423.00px;font-size:12px;line-height:12px;color:#2020ff;transform:scaleX(0.8409);">Incremental positioning (based on command position)</div>
<div class="t" style="left:696.66px;top:423.00px;font-size:12px;line-height:12px;color:#2020ff;transform-origin:50% 50%;transform:scaleX(0.9290);">0</div>
<div class="t" style="left:782.15px;top:423.00px;font-size:12px;line-height:12px;color:#2020ff;transform-origin:50% 50%;transform:scaleX(0.8428);">1000</div>
<div class="t" style="left:907.47px;top:423.00px;font-size:12px;line-height:12px;color:#2020ff;transform-origin:50% 50%;transform:scaleX(0.8531);">1000.000</div>
<div class="t" style="left:1061.47px;top:423.00px;font-size:12px;line-height:12px;color:#2020ff;transform-origin:50% 50%;transform:scaleX(0.8531);">1000.000</div>
<div class="t" style="left:1203.49px;top:423.00px;font-size:12px;line-height:12px;color:#2020ff;transform-origin:50% 50%;transform:scaleX(0.8492);">100.0</div>
<div class="t" style="left:411.20px;top:445.00px;font-size:12px;line-height:12px;color:#2020ff;transform:scaleX(0.8409);">Incremental positioning (based on command position)</div>
<div class="t" style="left:696.66px;top:445.00px;font-size:12px;line-height:12px;color:#2020ff;transform-origin:50% 50%;transform:scaleX(0.9290);">0</div>
<div class="t" style="left:782.15px;top:445.00px;font-size:12px;line-height:12px;color:#2020ff;transform-origin:50% 50%;transform:scaleX(0.8428);">1000</div>
<div class="t" style="left:907.47px;top:445.00px;font-size:12px;line-height:12px;color:#2020ff;transform-origin:50% 50%;transform:scaleX(0.8531);">1000.000</div>
<div class="t" style="left:1061.47px;top:445.00px;font-size:12px;line-height:12px;color:#2020ff;transform-origin:50% 50%;transform:scaleX(0.8531);">1000.000</div>
<div class="t" style="left:1203.49px;top:445.00px;font-size:12px;line-height:12px;color:#2020ff;transform-origin:50% 50%;transform:scaleX(0.8492);">100.0</div>
<div class="t" style="left:411.20px;top:468.00px;font-size:12px;line-height:12px;color:#2020ff;transform:scaleX(0.8409);">Incremental positioning (based on command position)</div>
<div class="t" style="left:696.66px;top:468.00px;font-size:12px;line-height:12px;color:#2020ff;transform-origin:50% 50%;transform:scaleX(0.9290);">0</div>
<div class="t" style="left:782.15px;top:468.00px;font-size:12px;line-height:12px;color:#2020ff;transform-origin:50% 50%;transform:scaleX(0.8428);">1000</div>
<div class="t" style="left:907.47px;top:468.00px;font-size:12px;line-height:12px;color:#2020ff;transform-origin:50% 50%;transform:scaleX(0.8531);">1000.000</div>
<div class="t" style="left:1061.47px;top:468.00px;font-size:12px;line-height:12px;color:#2020ff;transform-origin:50% 50%;transform:scaleX(0.8531);">1000.000</div>
<div class="t" style="left:1203.49px;top:468.00px;font-size:12px;line-height:12px;color:#2020ff;transform-origin:50% 50%;transform:scaleX(0.8492);">100.0</div>
<div class="t" style="left:411.20px;top:490.00px;font-size:12px;line-height:12px;color:#2020ff;transform:scaleX(0.8409);">Incremental positioning (based on command position)</div>
<div class="t" style="left:696.66px;top:490.00px;font-size:12px;line-height:12px;color:#2020ff;transform-origin:50% 50%;transform:scaleX(0.9290);">0</div>
<div class="t" style="left:782.15px;top:490.00px;font-size:12px;line-height:12px;color:#2020ff;transform-origin:50% 50%;transform:scaleX(0.8428);">1000</div>
<div class="t" style="left:907.47px;top:490.00px;font-size:12px;line-height:12px;color:#2020ff;transform-origin:50% 50%;transform:scaleX(0.8531);">1000.000</div>
<div class="t" style="left:1061.47px;top:490.00px;font-size:12px;line-height:12px;color:#2020ff;transform-origin:50% 50%;transform:scaleX(0.8531);">1000.000</div>
<div class="t" style="left:1203.49px;top:490.00px;font-size:12px;line-height:12px;color:#2020ff;transform-origin:50% 50%;transform:scaleX(0.8492);">100.0</div>
<div class="t" style="left:411.20px;top:512.00px;font-size:12px;line-height:12px;color:#2020ff;transform:scaleX(0.8409);">Incremental positioning (based on command position)</div>
<div class="t" style="left:696.66px;top:512.00px;font-size:12px;line-height:12px;color:#2020ff;transform-origin:50% 50%;transform:scaleX(0.9290);">0</div>
<div class="t" style="left:782.15px;top:512.00px;font-size:12px;line-height:12px;color:#2020ff;transform-origin:50% 50%;transform:scaleX(0.8428);">1000</div>
<div class="t" style="left:907.47px;top:512.00px;font-size:12px;line-height:12px;color:#2020ff;transform-origin:50% 50%;transform:scaleX(0.8531);">1000.000</div>
<div class="t" style="left:1061.47px;top:512.00px;font-size:12px;line-height:12px;color:#2020ff;transform-origin:50% 50%;transform:scaleX(0.8531);">1000.000</div>
<div class="t" style="left:1203.49px;top:512.00px;font-size:12px;line-height:12px;color:#2020ff;transform-origin:50% 50%;transform:scaleX(0.8492);">100.0</div>
<div class="t" style="left:411.20px;top:534.00px;font-size:12px;line-height:12px;color:#2020ff;transform:scaleX(0.8409);">Incremental positioning (based on command position)</div>
<div class="t" style="left:696.66px;top:534.00px;font-size:12px;line-height:12px;color:#2020ff;transform-origin:50% 50%;transform:scaleX(0.9290);">0</div>
<div class="t" style="left:782.15px;top:534.00px;font-size:12px;line-height:12px;color:#2020ff;transform-origin:50% 50%;transform:scaleX(0.8428);">1000</div>
<div class="t" style="left:907.47px;top:534.00px;font-size:12px;line-height:12px;color:#2020ff;transform-origin:50% 50%;transform:scaleX(0.8531);">1000.000</div>
<div class="t" style="left:1061.47px;top:534.00px;font-size:12px;line-height:12px;color:#2020ff;transform-origin:50% 50%;transform:scaleX(0.8531);">1000.000</div>
<div class="t" style="left:1203.49px;top:534.00px;font-size:12px;line-height:12px;color:#2020ff;transform-origin:50% 50%;transform:scaleX(0.8492);">100.0</div>
<div class="t" style="left:411.20px;top:556.00px;font-size:12px;line-height:12px;color:#2020ff;transform:scaleX(0.8409);">Incremental positioning (based on command position)</div>
<div class="t" style="left:696.66px;top:556.00px;font-size:12px;line-height:12px;color:#2020ff;transform-origin:50% 50%;transform:scaleX(0.9290);">0</div>
<div class="t" style="left:782.15px;top:556.00px;font-size:12px;line-height:12px;color:#2020ff;transform-origin:50% 50%;transform:scaleX(0.8428);">1000</div>
<div class="t" style="left:907.47px;top:556.00px;font-size:12px;line-height:12px;color:#2020ff;transform-origin:50% 50%;transform:scaleX(0.8531);">1000.000</div>
<div class="t" style="left:1061.47px;top:556.00px;font-size:12px;line-height:12px;color:#2020ff;transform-origin:50% 50%;transform:scaleX(0.8531);">1000.000</div>
<div class="t" style="left:1203.49px;top:556.00px;font-size:12px;line-height:12px;color:#2020ff;transform-origin:50% 50%;transform:scaleX(0.8492);">100.0</div>
<div class="t" style="left:411.20px;top:578.00px;font-size:12px;line-height:12px;color:#2020ff;transform:scaleX(0.8409);">Incremental positioning (based on command position)</div>
<div class="t" style="left:696.66px;top:578.00px;font-size:12px;line-height:12px;color:#2020ff;transform-origin:50% 50%;transform:scaleX(0.9290);">0</div>
<div class="t" style="left:782.15px;top:578.00px;font-size:12px;line-height:12px;color:#2020ff;transform-origin:50% 50%;transform:scaleX(0.8428);">1000</div>
<div class="t" style="left:907.47px;top:578.00px;font-size:12px;line-height:12px;color:#2020ff;transform-origin:50% 50%;transform:scaleX(0.8531);">1000.000</div>
<div class="t" style="left:1061.47px;top:578.00px;font-size:12px;line-height:12px;color:#2020ff;transform-origin:50% 50%;transform:scaleX(0.8531);">1000.000</div>
<div class="t" style="left:1203.49px;top:578.00px;font-size:12px;line-height:12px;color:#2020ff;transform-origin:50% 50%;transform:scaleX(0.8492);">100.0</div>
<div class="t" style="left:411.20px;top:601.00px;font-size:12px;line-height:12px;color:#2020ff;transform:scaleX(0.8409);">Incremental positioning (based on command position)</div>
<div class="t" style="left:696.66px;top:601.00px;font-size:12px;line-height:12px;color:#2020ff;transform-origin:50% 50%;transform:scaleX(0.9290);">0</div>
<div class="t" style="left:782.15px;top:601.00px;font-size:12px;line-height:12px;color:#2020ff;transform-origin:50% 50%;transform:scaleX(0.8428);">1000</div>
<div class="t" style="left:907.47px;top:601.00px;font-size:12px;line-height:12px;color:#2020ff;transform-origin:50% 50%;transform:scaleX(0.8531);">1000.000</div>
<div class="t" style="left:1061.47px;top:601.00px;font-size:12px;line-height:12px;color:#2020ff;transform-origin:50% 50%;transform:scaleX(0.8531);">1000.000</div>
<div class="t" style="left:1203.49px;top:601.00px;font-size:12px;line-height:12px;color:#2020ff;transform-origin:50% 50%;transform:scaleX(0.8492);">100.0</div>
<div class="t" style="left:411.20px;top:623.00px;font-size:12px;line-height:12px;color:#2020ff;transform:scaleX(0.8409);">Incremental positioning (based on command position)</div>
<div class="t" style="left:696.66px;top:623.00px;font-size:12px;line-height:12px;color:#2020ff;transform-origin:50% 50%;transform:scaleX(0.9290);">0</div>
<div class="t" style="left:782.15px;top:623.00px;font-size:12px;line-height:12px;color:#2020ff;transform-origin:50% 50%;transform:scaleX(0.8428);">1000</div>
<div class="t" style="left:907.47px;top:623.00px;font-size:12px;line-height:12px;color:#2020ff;transform-origin:50% 50%;transform:scaleX(0.8531);">1000.000</div>
<div class="t" style="left:1061.47px;top:623.00px;font-size:12px;line-height:12px;color:#2020ff;transform-origin:50% 50%;transform:scaleX(0.8531);">1000.000</div>
<div class="t" style="left:1203.49px;top:623.00px;font-size:12px;line-height:12px;color:#2020ff;transform-origin:50% 50%;transform:scaleX(0.8492);">100.0</div>
<div class="t" style="left:411.20px;top:645.00px;font-size:12px;line-height:12px;color:#2020ff;transform:scaleX(0.8409);">Incremental positioning (based on command position)</div>
<div class="t" style="left:696.66px;top:645.00px;font-size:12px;line-height:12px;color:#2020ff;transform-origin:50% 50%;transform:scaleX(0.9290);">0</div>
<div class="t" style="left:782.15px;top:645.00px;font-size:12px;line-height:12px;color:#2020ff;transform-origin:50% 50%;transform:scaleX(0.8428);">1000</div>
<div class="t" style="left:907.47px;top:645.00px;font-size:12px;line-height:12px;color:#2020ff;transform-origin:50% 50%;transform:scaleX(0.8531);">1000.000</div>
<div class="t" style="left:1061.47px;top:645.00px;font-size:12px;line-height:12px;color:#2020ff;transform-origin:50% 50%;transform:scaleX(0.8531);">1000.000</div>
<div class="t" style="left:1203.49px;top:645.00px;font-size:12px;line-height:12px;color:#2020ff;transform-origin:50% 50%;transform:scaleX(0.8492);">100.0</div>
<div class="t" style="left:411.20px;top:667.00px;font-size:12px;line-height:12px;color:#2020ff;transform:scaleX(0.8409);">Incremental positioning (based on command position)</div>
<div class="t" style="left:696.66px;top:667.00px;font-size:12px;line-height:12px;color:#2020ff;transform-origin:50% 50%;transform:scaleX(0.9290);">0</div>
<div class="t" style="left:782.15px;top:667.00px;font-size:12px;line-height:12px;color:#2020ff;transform-origin:50% 50%;transform:scaleX(0.8428);">1000</div>
<div class="t" style="left:907.47px;top:667.00px;font-size:12px;line-height:12px;color:#2020ff;transform-origin:50% 50%;transform:scaleX(0.8531);">1000.000</div>
<div class="t" style="left:1061.47px;top:667.00px;font-size:12px;line-height:12px;color:#2020ff;transform-origin:50% 50%;transform:scaleX(0.8531);">1000.000</div>
<div class="t" style="left:1203.49px;top:667.00px;font-size:12px;line-height:12px;color:#2020ff;transform-origin:50% 50%;transform:scaleX(0.8492);">100.0</div>
<svg style="left:0;top:0" width="1280" height="674"><rect x="399.50" y="150.60" width="261.00" height="21.20" fill="#0a5cc0"/><rect x="401.00" y="152.10" width="258.00" height="18.20" fill="#d8ecfa"/><rect x="402.00" y="153.10" width="256.00" height="16.20" fill="#cce4f7"/><rect x="399.50" y="150.60" width="261.00" height="1.50" fill="#0a2a5a"/></svg>
<div class="t" style="left:404.20px;top:157.00px;font-size:11.5px;line-height:11.5px;color:#000;transform:scaleX(0.8769);">Incremental positioning (based on command position</div>
<svg style="left:643px;top:156px" width="16" height="12"><path d="M4.3 3.8 L8.5 8 L12.7 3.8" fill="none" stroke="#404040" stroke-width="1.1"/></svg>
<svg style="left:0;top:0" width="1280" height="674"><rect x="402.00" y="173.00" width="260.50" height="227.50" fill="rgba(0,0,0,0.10)"/><rect x="399.70" y="171.50" width="261.00" height="227.50" fill="#1e7fd0"/><rect x="401.10" y="171.50" width="258.20" height="226.00" fill="#ffffff"/></svg>
<div class="t" style="left:403.00px;top:174.00px;font-size:11.5px;line-height:11.5px;color:#000;transform:scaleX(0.8793);">Absolute positioning</div>
<div class="t" style="left:403.00px;top:187.00px;font-size:11.5px;line-height:11.5px;color:#000;transform:scaleX(0.8793);">Incremental positioning (based on command position)</div>
<div class="t" style="left:403.00px;top:199.00px;font-size:11.5px;line-height:11.5px;color:#000;transform:scaleX(0.8793);">Incremental positioning (based on feedback position)</div>
<div class="t" style="left:403.00px;top:212.00px;font-size:11.5px;line-height:11.5px;color:#000;transform:scaleX(0.8793);">Continuous (Position control)</div>
<div class="t" style="left:403.00px;top:224.00px;font-size:11.5px;line-height:11.5px;color:#000;transform:scaleX(0.8793);">Wrap absolute positioning</div>
<div class="t" style="left:403.00px;top:237.00px;font-size:11.5px;line-height:11.5px;color:#000;transform:scaleX(0.8793);">Wrap proximity positioning</div>
<div class="t" style="left:403.00px;top:249.00px;font-size:11.5px;line-height:11.5px;color:#000;transform:scaleX(0.8793);">Wrap absolute positioning (FWD)</div>
<div class="t" style="left:403.00px;top:262.00px;font-size:11.5px;line-height:11.5px;color:#000;transform:scaleX(0.8793);">Wrap absolute positioning (RVS)</div>
<div class="t" style="left:403.00px;top:274.00px;font-size:11.5px;line-height:11.5px;color:#000;transform:scaleX(0.8793);">Wrap absolute push-motion</div>
<div class="t" style="left:403.00px;top:287.00px;font-size:11.5px;line-height:11.5px;color:#000;transform:scaleX(0.8793);">Wrap proximity push-motion</div>
<div class="t" style="left:403.00px;top:299.00px;font-size:11.5px;line-height:11.5px;color:#000;transform:scaleX(0.8793);">Wrap push-motion (FWD)</div>
<div class="t" style="left:403.00px;top:312.00px;font-size:11.5px;line-height:11.5px;color:#000;transform:scaleX(0.8793);">Wrap push-motion (RVS)</div>
<div class="t" style="left:403.00px;top:324.00px;font-size:11.5px;line-height:11.5px;color:#000;transform:scaleX(0.8793);">Continuous (Speed control)</div>
<svg style="left:0;top:0" width="1280" height="674"><rect x="401.10" y="335.50" width="258.20" height="12.10" fill="#3399ff"/></svg>
<svg style="left:0;top:0" width="1280" height="674"><rect x="401.6" y="336" width="257.2" height="11.1" fill="none" stroke="#8a6a50" stroke-width="0.9" stroke-dasharray="1 1" opacity="0.8"/></svg>
<div class="t" style="left:403.00px;top:337.00px;font-size:11.5px;line-height:11.5px;color:#fff;transform:scaleX(0.8793);">Continuous (Push motion)</div>
<div class="t" style="left:403.00px;top:349.00px;font-size:11.5px;line-height:11.5px;color:#000;transform:scaleX(0.8793);">Continuous (Torque control)</div>
<div class="t" style="left:403.00px;top:362.00px;font-size:11.5px;line-height:11.5px;color:#000;transform:scaleX(0.8793);">Absolute push-motion</div>
<div class="t" style="left:403.00px;top:374.00px;font-size:11.5px;line-height:11.5px;color:#000;transform:scaleX(0.8793);">Incremental push-motion (based on command position)</div>
<div class="t" style="left:403.00px;top:387.00px;font-size:11.5px;line-height:11.5px;color:#000;transform:scaleX(0.8793);">Incremental push-motion (based on feedback position)</div>
<div style="left:7px;top:153px;width:153.5px;height:26px;border:5px solid #ffff00"></div>
<div style="left:7px;top:273px;width:153.5px;height:26px;border:5px solid #ffff00"></div>
<div style="left:387px;top:328.2px;width:155.20000000000005px;height:27.0px;border:5.3px solid #ffff00"></div>
</body></html>
